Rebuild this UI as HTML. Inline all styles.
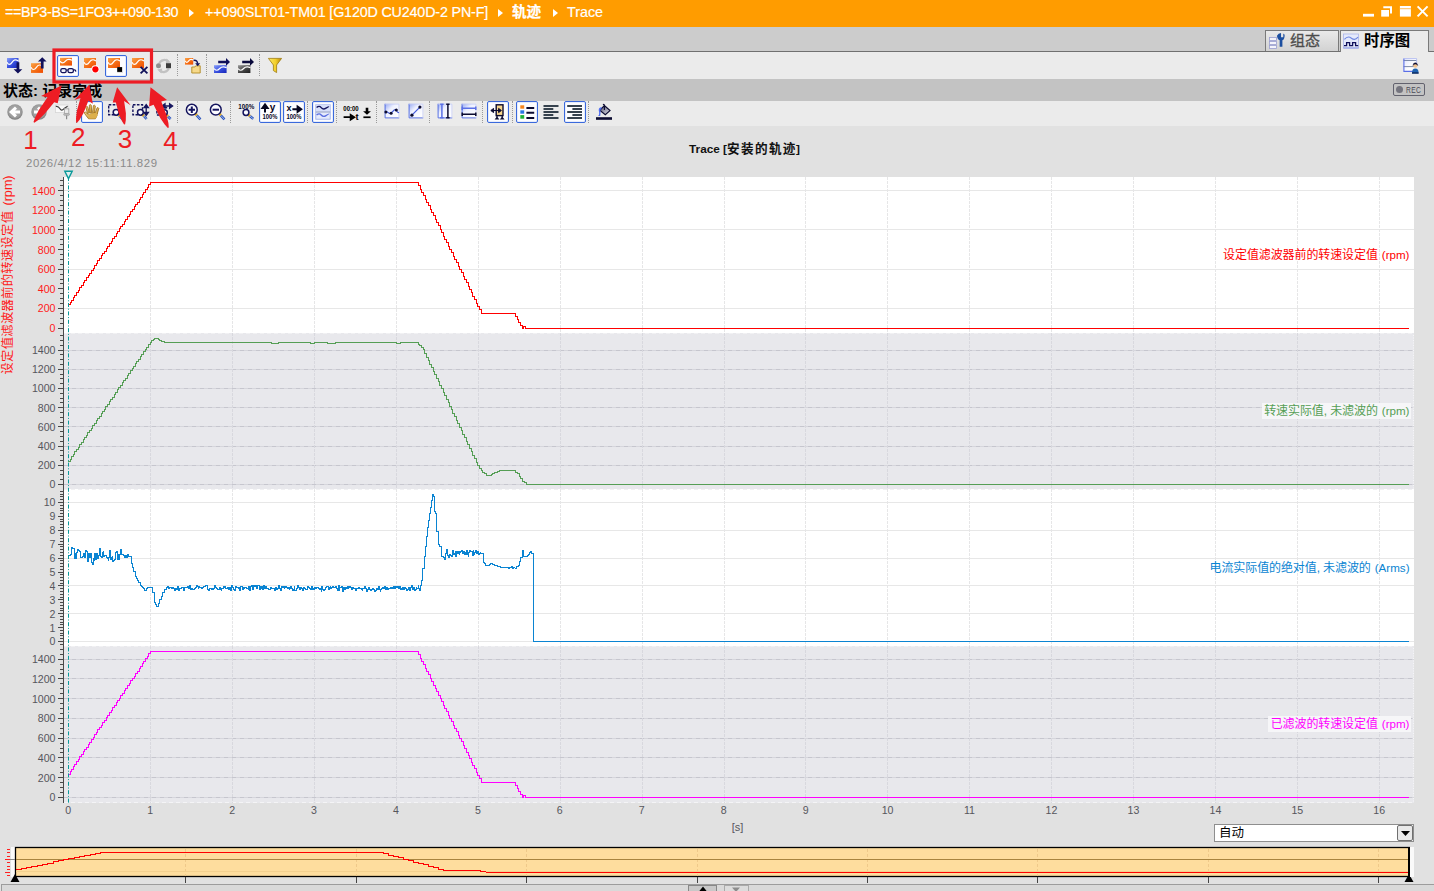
<!DOCTYPE html><html lang="zh-CN"><head><meta charset="utf-8"><title>Trace</title><style>
html,body{margin:0;padding:0;background:#e1e1e1;}
body{width:1434px;height:891px;overflow:hidden;position:relative;font-family:"Liberation Sans", "Noto Sans CJK SC", sans-serif;}
#root{position:absolute;left:0;top:0;width:1434px;height:891px;overflow:hidden;background:#e1e1e1;}
#root div,#root svg,#root span,#root i{position:absolute;}
.tri{top:9px;width:0;height:0;border-left:5px solid #fff;border-top:4px solid transparent;border-bottom:4px solid transparent;}
.title{left:0;top:0;width:1434px;height:27px;background:#ff9c00;}
.title span{top:3px;color:#fff;font-size:14.3px;line-height:18px;white-space:pre;-webkit-text-stroke:.2px #fff;}
.tabband{left:0;top:27px;width:1434px;height:24px;background:#cccccc;}
.tabline{left:0;top:51px;width:1434px;height:1px;background:#707070;}
.tb1{left:0;top:52px;width:1434px;height:27px;background:#ebebeb;}
.status{left:0;top:79px;width:1434px;height:22px;background:#c3c3c3;}
.status span{left:3px;top:2px;font-size:15px;font-weight:bold;line-height:20px;color:#000;white-space:pre;}
.tb2{left:0;top:101px;width:1434px;height:25px;background:#ebebeb;}
.ic{overflow:visible;}
.sel{width:20px;height:20px;border:1px solid #3a69dc;border-radius:2px;background:#fdfdff;box-shadow:inset 0 0 0 1px #e6ecfb;}
.sep{width:0;height:22px;border-left:1px dotted #9a9a9a;}
.tab{top:30px;height:21px;border:1px solid #7a7a7a;border-bottom:none;box-sizing:border-box;font-size:15px;line-height:20px;white-space:pre;}
.chart{left:0;top:0;}
.ann{overflow:visible;}
.combo{left:1214px;top:824px;width:198px;height:16px;background:#fff;border:1px solid #8e8e8e;font-size:12.5px;line-height:16px;color:#000;}
.combo span{left:4px;top:0;}
.combo div{right:0;top:0;width:14px;height:14px;border:1px solid #707070;background:#e9e9e9;border-radius:2px;}
.hbar{left:1px;top:884px;width:1432px;height:6px;background:#d9d9d9;border:1px solid #9c9c9c;border-bottom:none;}
</style></head><body><div id="root"><div class="title"><span style="left:5px;letter-spacing:-0.35px">==BP3-BS=1FO3++090-130</span><i class="tri" style="left:189px"></i><span style="left:205px;letter-spacing:-0.16px">++090SLT01-TM01 [G120D CU240D-2 PN-F]</span><i class="tri" style="left:498px"></i><span style="left:512px;font-weight:bold;font-size:14.6px">轨迹</span><i class="tri" style="left:553px"></i><span style="left:567px">Trace</span><svg style="left:1360px;top:5px" width="72" height="16" viewBox="0 0 72 16"><rect x="3" y="8.8" width="11" height="2.8" fill="#fff"/><path d="M23.3 2.3 H31 V8.6" fill="none" stroke="#fff" stroke-width="2"/><rect x="21.2" y="5" width="7.8" height="6.6" fill="#fff"/><rect x="39.9" y="1" width="11" height="10.6" fill="#fff"/><rect x="39.9" y="3.3" width="11" height=".9" fill="#ffb240"/><path d="M57.6 1.4 l10 10 M67.6 1.4 l-10 10" stroke="#fff" stroke-width="2"/></svg></div><div class="tabband"></div><div class="tabline"></div><div class="tab" style="left:1265px;width:74px;background:linear-gradient(#e9e9e9,#d2d2d2);color:#4c4c4c;-webkit-text-stroke:.3px #4c4c4c;"><svg style="left:3px;top:2px" width="18" height="17" viewBox="0 0 18 17"><g fill="#f4f4fb" stroke="#9a9ed0" stroke-width=".8"><rect x=".5" y="4.5" width="7" height="3"/><rect x=".5" y="8.5" width="7" height="3"/><rect x=".5" y="12.5" width="7" height="3"/></g><g transform="translate(-2.2 -.6) scale(1.13)"><path d="M9 3 q.4 3.4 2.4 4 v5.6 h2.4 v-5.6 q2 -.8 2 -5 l-1.2 -1 v3.4 h-2 v-3.8 q-2.4 .2 -3.6 2.4z" fill="#1d4fa0"/></g></svg><span style="left:24px;top:0">组态</span></div><div class="tab" style="left:1340px;width:89px;height:22px;background:#ebebeb;color:#000;font-weight:bold;"><svg style="left:2px;top:2px" width="17" height="17" viewBox="0 0 17 17"><rect x=".5" y="1" width="15" height="14" fill="#e4e9fb" stroke="#aab4ea" stroke-width=".8"/><path d="M1.4 6.4 q3.4 -4 7 -1.2 t6.6 -1" fill="none" stroke="#6f86e0" stroke-width="1.1"/><path d="M1 12.6 h2.6 v-3 h3 v3 h3 v-3 h3 v3 h2.6" fill="none" stroke="#10105a" stroke-width="1.3"/><path d="M.5 15 h15" stroke="#8f9de8" stroke-width="1"/></svg><span style="left:23px;top:0;font-size:15.4px">时序图</span></div><div class="tb1"></div><div class="status"><span>状态: 记录完成</span><div style="left:1393px;top:4px;width:32px;height:13px;border:1px solid #62626e;border-radius:2px;box-sizing:border-box;"></div><div style="left:1396px;top:7px;width:7px;height:7px;border-radius:50%;background:#74747e;"></div><span style="left:1406px;top:4.5px;font-size:9px;font-weight:normal;line-height:12px;color:#4a4a56;letter-spacing:.5px;transform:scaleX(.74);transform-origin:0 50%;">REC</span></div><div class="tb2"></div><svg class="ic" style="left:7.0px;top:58.0px" width="16" height="16" viewBox="0 0 16 16"><defs><linearGradient id="g1" x1="0" y1="0" x2="1" y2="1"><stop offset="0" stop-color="#8aa0fa"/><stop offset=".5" stop-color="#3a52e0"/><stop offset="1" stop-color="#1626b8"/></linearGradient></defs><rect x="0.0" y="0.0" width="11.5" height="10.0" fill="url(#g1)"/><path d="M0.0 4.2 c1.4 3.0 3.2 3.0 5.2 0.0 s3.4 -3.0 6.3 -1.2" fill="none" stroke="#fff" stroke-width="1.2"/><path d="M9.6 4.3 h2.7 v7 h3 l-4.35 4.2 l-4.35 -4.2 h3z" fill="#10105a"/></svg><svg class="ic" style="left:31.0px;top:58.0px" width="16" height="16" viewBox="0 0 16 16"><defs><linearGradient id="g2" x1="0" y1="0" x2="1" y2="1"><stop offset="0" stop-color="#f9a248"/><stop offset=".5" stop-color="#f57218"/><stop offset="1" stop-color="#ee4a00"/></linearGradient></defs><rect x="0.0" y="5.2" width="12.0" height="9.7" fill="url(#g2)"/><path d="M0.0 9.3 c1.4 2.9 3.4 2.9 5.4 0.0 s3.6 -2.9 6.6 -1.2" fill="none" stroke="#fff" stroke-width="1.2"/><path d="M9.9 10.4 h2.7 v-7 h3 l-4.35 -4.2 l-4.35 4.2 h3z" fill="#10105a"/></svg><div class="sel" style="left:57.0px;top:55.0px"></div><svg class="ic" style="left:60.0px;top:58.0px" width="16" height="16" viewBox="0 0 16 16"><defs><linearGradient id="g3" x1="0" y1="0" x2="1" y2="1"><stop offset="0" stop-color="#f9a248"/><stop offset=".5" stop-color="#f57218"/><stop offset="1" stop-color="#ee4a00"/></linearGradient></defs><rect x="0.0" y="-0.2" width="12.0" height="7.8" fill="url(#g3)"/><path d="M0.0 3.1 c1.4 2.3 3.4 2.3 5.4 0.0 s3.6 -2.3 6.6 -0.9" fill="none" stroke="#fff" stroke-width="1.2"/><g fill="#eef0fa" stroke="#10105a" stroke-width="1.3"><rect x=".8" y="10.6" width="5.4" height="4" rx="1.6"/><rect x="8" y="10.6" width="5.4" height="4" rx="1.6"/></g><path d="M6.2 12 h1.8 M13.4 12 q2.2 -.6 2.4 1.6" fill="none" stroke="#10105a" stroke-width="1.2"/></svg><svg class="ic" style="left:84.0px;top:58.0px" width="16" height="16" viewBox="0 0 16 16"><defs><linearGradient id="g4" x1="0" y1="0" x2="1" y2="1"><stop offset="0" stop-color="#f9a248"/><stop offset=".5" stop-color="#f57218"/><stop offset="1" stop-color="#ee4a00"/></linearGradient></defs><rect x="0.0" y="0.0" width="12.0" height="10.0" fill="url(#g4)"/><path d="M0.0 4.2 c1.4 3.0 3.4 3.0 5.4 0.0 s3.6 -3.0 6.6 -1.2" fill="none" stroke="#fff" stroke-width="1.2"/><circle cx="11.4" cy="11.3" r="4" fill="#fff"/><circle cx="11.4" cy="11.3" r="3.1" fill="#ff0000"/></svg><div class="sel" style="left:105.0px;top:55.0px"></div><svg class="ic" style="left:108.0px;top:58.0px" width="16" height="16" viewBox="0 0 16 16"><defs><linearGradient id="g5" x1="0" y1="0" x2="1" y2="1"><stop offset="0" stop-color="#f9a248"/><stop offset=".5" stop-color="#f57218"/><stop offset="1" stop-color="#ee4a00"/></linearGradient></defs><rect x="0.0" y="0.0" width="12.0" height="10.0" fill="url(#g5)"/><path d="M0.0 4.2 c1.4 3.0 3.4 3.0 5.4 0.0 s3.6 -3.0 6.6 -1.2" fill="none" stroke="#fff" stroke-width="1.2"/><rect x="9.2" y="9.1" width="5.8" height="5.8" fill="#dcdcdc"/><rect x="9.2" y="9.1" width="4.8" height="4.8" fill="#000"/></svg><svg class="ic" style="left:132.0px;top:58.0px" width="16" height="16" viewBox="0 0 16 16"><defs><linearGradient id="g6" x1="0" y1="0" x2="1" y2="1"><stop offset="0" stop-color="#f9a248"/><stop offset=".5" stop-color="#f57218"/><stop offset="1" stop-color="#ee4a00"/></linearGradient></defs><rect x="0.0" y="0.0" width="12.0" height="10.0" fill="url(#g6)"/><path d="M0.0 4.2 c1.4 3.0 3.4 3.0 5.4 0.0 s3.6 -3.0 6.6 -1.2" fill="none" stroke="#fff" stroke-width="1.2"/><path d="M8.6 8.8 l6.8 6.6 M15.4 8.8 l-6.8 6.6" stroke="#10105a" stroke-width="1.8"/></svg><svg class="ic" style="left:156.0px;top:58.0px" width="16" height="16" viewBox="0 0 16 16"><g fill="none" stroke="#c2c2c2" stroke-width="2.2"><path d="M3.2 5.6 a5.6 5.6 0 0 1 9.2 -2"/><path d="M12.8 10.4 a5.6 5.6 0 0 1 -9.2 2"/></g><path d="M10.6 .6 l4.2 3.8 l-5 1.2z M5.4 15.4 l-4.2 -3.8 l5 -1.2z" fill="#c2c2c2"/><circle cx="2.5" cy="7.7" r="2.5" fill="#8f8f8f"/><rect x="10" y="5.2" width="5" height="5" fill="#3c3c3c"/></svg><div class="sep" style="left:177px;top:54px"></div><svg class="ic" style="left:185.0px;top:58.0px" width="16" height="16" viewBox="0 0 16 16"><defs><linearGradient id="g8" x1="0" y1="0" x2="1" y2="1"><stop offset="0" stop-color="#f9a248"/><stop offset=".5" stop-color="#f57218"/><stop offset="1" stop-color="#ee4a00"/></linearGradient></defs><rect x="0.0" y="0.0" width="8.2" height="6.6" fill="url(#g8)"/><path d="M0.0 2.8 c1.0 2.0 2.3 2.0 3.7 0.0 s2.5 -2.0 4.5 -0.8" fill="none" stroke="#fff" stroke-width="1.2"/><path d="M6.8 9 h3 l1 -1.2 h4.4 v7.2 h-8.4z" fill="#f6d98a" stroke="#b08a24" stroke-width=".9"/><path d="M8.6 2.4 q4 -.6 4 3.4" fill="none" stroke="#10105a" stroke-width="1.5"/><path d="M10.2 5.2 h5 l-2.5 3z" fill="#10105a"/></svg><div class="sep" style="left:206px;top:54px"></div><svg class="ic" style="left:214.0px;top:58.0px" width="16" height="16" viewBox="0 0 16 16"><defs><linearGradient id="g9" x1="0" y1="0" x2="1" y2="1"><stop offset="0" stop-color="#8aa0fa"/><stop offset=".5" stop-color="#3a52e0"/><stop offset="1" stop-color="#1626b8"/></linearGradient></defs><rect x="0.0" y="7.2" width="12.6" height="7.8" fill="url(#g9)"/><path d="M0.0 10.5 c1.5 2.3 3.5 2.3 5.7 0.0 s3.8 -2.3 6.9 -0.9" fill="none" stroke="#fff" stroke-width="1.2"/><path d="M4.2 2.7 h7.8 v-2.7 l4 3.9 l-4 3.9 v-2.6 h-7.8z" fill="#10105a"/></svg><svg class="ic" style="left:238.0px;top:58.0px" width="16" height="16" viewBox="0 0 16 16"><defs><linearGradient id="g10" x1="0" y1="0" x2="1" y2="1"><stop offset="0" stop-color="#9a9a9a"/><stop offset=".5" stop-color="#4a4a4a"/><stop offset="1" stop-color="#1e1e1e"/></linearGradient></defs><rect x="0.0" y="7.2" width="12.4" height="7.8" fill="url(#g10)"/><path d="M0.0 10.5 c1.5 2.3 3.5 2.3 5.6 0.0 s3.7 -2.3 6.8 -0.9" fill="none" stroke="#fff" stroke-width="1.2"/><path d="M4.2 2.7 h7.8 v-2.7 l4 3.9 l-4 3.9 v-2.6 h-7.8z" fill="#0a0a3c"/></svg><div class="sep" style="left:259px;top:54px"></div><svg class="ic" style="left:266.5px;top:58.0px" width="16" height="16" viewBox="0 0 16 16"><defs><linearGradient id="gf" x1="0" y1="0" x2="1" y2="0"><stop offset="0" stop-color="#fbe96e"/><stop offset=".55" stop-color="#f2cf2a"/><stop offset="1" stop-color="#b8860b"/></linearGradient></defs><path d="M1.4 .4 h13.2 l-5 6.6 v7.6 l-3.2 -2 v-5.6z" fill="url(#gf)" stroke="#a07c10" stroke-width=".8"/></svg><svg class="ic" style="left:1403.0px;top:58.0px" width="16" height="16" viewBox="0 0 16 16"><defs><linearGradient id="gtb" x1="0" y1="0" x2="1" y2="1"><stop offset="0" stop-color="#dfe4fb"/><stop offset=".6" stop-color="#ffffff"/></linearGradient></defs><rect x=".6" y=".4" width="13" height="13.2" fill="url(#gtb)"/><path d="M.6 2.5 h13 M.6 8.6 h13" stroke="#7e8ca8" stroke-width="1"/><path d="M.9 .4 v13 h9" fill="none" stroke="#5a6ee6" stroke-width="1.1"/><path d="M.6 .6 h13 v8" fill="none" stroke="#aab4ee" stroke-width=".8"/><path d="M9 15.4 q-.2 -4.8 3.3 -4.8 q3.5 0 3.3 4.8z" fill="#1e62b0"/><rect x="9" y="14.4" width="6.6" height="1.2" fill="#0a1e50"/><circle cx="12.3" cy="7.6" r="2.2" fill="#f2c48e"/><path d="M10 7.4 q.2 -2.6 2.3 -2.6 q2.1 0 2.3 2.6 q-.6 -1.4 -2.3 -1.4 q-1.7 0 -2.3 1.4z" fill="#0a0a30" stroke="#0a0a30" stroke-width=".5"/></svg><svg class="ic" style="left:6.6px;top:103.5px" width="16" height="16" viewBox="0 0 16 16"><defs><radialGradient id="gb0" cx=".5" cy=".45" r=".55"><stop offset="0" stop-color="#b4b4b4"/><stop offset=".75" stop-color="#9c9c9c"/><stop offset="1" stop-color="#7a7a7a"/></radialGradient></defs><circle cx="8" cy="8" r="7.7" fill="url(#gb0)"/><path d="M13 8 h-7 M9 3.6 l-4.8 4.4 l4.8 4.4" fill="none" stroke="#fff" stroke-width="3" stroke-linejoin="miter"/></svg><svg class="ic" style="left:30.7px;top:103.5px" width="16" height="16" viewBox="0 0 16 16"><defs><radialGradient id="gb1" cx=".5" cy=".45" r=".55"><stop offset="0" stop-color="#b4b4b4"/><stop offset=".75" stop-color="#9c9c9c"/><stop offset="1" stop-color="#7a7a7a"/></radialGradient></defs><circle cx="8" cy="8" r="7.7" fill="url(#gb1)"/><path d="M3 8 h7 M7 3.6 l4.8 4.4 l-4.8 4.4" fill="none" stroke="#fff" stroke-width="3" stroke-linejoin="miter"/></svg><svg class="ic" style="left:55.0px;top:103.5px" width="16" height="16" viewBox="0 0 16 16"><rect x=".4" y="1" width="12.6" height="7.6" fill="#fafafa" stroke="#d6d6d6" stroke-width=".8"/><path d="M.8 2.4 q2.6 -.4 4.2 2.4 t4.6 -.6 l3 -2" fill="none" stroke="#3e3e3e" stroke-width="1.2"/><rect x="9.4" y="4.8" width="4.4" height="4.6" fill="#ececec" stroke="#a6a6a6" stroke-width=".9"/><path d="M8.4 10 h6.4 l-1 1.6 h-4.4z" fill="#c4c4c4" stroke="#a0a0a0" stroke-width=".6"/><path d="M11.6 11.6 v3.6" stroke="#8a8a8a" stroke-width="1.2"/></svg><div class="sep" style="left:76px;top:101px"></div><div class="sel" style="left:81.0px;top:101.0px"></div><svg class="ic" style="left:84.0px;top:104.0px" width="16" height="16" viewBox="0 0 16 16"><defs><linearGradient id="gh" x1="0" y1="0" x2="1" y2="1"><stop offset="0" stop-color="#f4d890"/><stop offset="1" stop-color="#c48c24"/></linearGradient></defs><g fill="url(#gh)" stroke="#9c6c14" stroke-width=".8" stroke-linejoin="round"><path d="M4.6 14.8 q-2.4 -3 -4.2 -5.6 q-.3 -1.5 1.2 -1.1 l2.6 2.4 l6.8 -1.4 l2 -.6 q.6 3.6 -1.6 6.3z"/><path d="M3.4 9.6 l-1.5 -6.4 q.6 -1.3 1.8 -.4 l1.7 6z"/><path d="M5.8 8.8 l-.5 -7.6 q.9 -1.2 1.9 -.1 l.6 7.6z"/><path d="M8.5 8.7 l.9 -7.1 q1.1 -.9 1.9 .3 l-.7 7.1z"/><path d="M11.1 9.2 l2 -5.4 q1.1 -.6 1.7 .6 l-1.6 5.8z"/></g><path d="M4.2 10.2 l8.6 -1.6 l.6 3 l-1.6 2.8 h-6.6z" fill="#ddb04c"/></svg><svg class="ic" style="left:108.0px;top:104.0px" width="16" height="16" viewBox="0 0 16 16"><rect x="0.7" y="0.8" width="9.8" height="10.0" fill="none" stroke="#15155e" stroke-width="1.4" stroke-dasharray="2.6 1.4"/><line x1="11.7" y1="12.0" x2="14.6" y2="15.0" stroke="#2f55b8" stroke-width="2.6"/><line x1="11.7" y1="12.0" x2="14.6" y2="15.0" stroke="#8fb0ee" stroke-width="1"/><line x1="10.3" y1="10.5" x2="11.7" y2="12.0" stroke="#e3b02a" stroke-width="2.8"/><circle cx="8.1" cy="8.3" r="2.9" fill="#fbfbff" stroke="#15155e" stroke-width="1.5"/></svg><svg class="ic" style="left:132.0px;top:104.0px" width="16" height="16" viewBox="0 0 16 16"><rect x="0.9" y="0.8" width="9.6" height="10.0" fill="none" stroke="#15155e" stroke-width="1.4" stroke-dasharray="2.6 1.4"/><line x1="11.9" y1="12.0" x2="14.6" y2="15.0" stroke="#2f55b8" stroke-width="2.6"/><line x1="11.9" y1="12.0" x2="14.6" y2="15.0" stroke="#8fb0ee" stroke-width="1"/><line x1="10.5" y1="10.6" x2="11.9" y2="12.0" stroke="#e3b02a" stroke-width="2.8"/><circle cx="8.4" cy="8.3" r="2.9" fill="#fbfbff" stroke="#15155e" stroke-width="1.5"/><path d="M14.2 2 v8 M12 3.6 l2.2 -3 l2.2 3z M12 8.4 l2.2 3 l2.2 -3z" stroke="#15155e" stroke-width="1.3" fill="#15155e"/></svg><svg class="ic" style="left:156.0px;top:104.0px" width="16" height="16" viewBox="0 0 16 16"><rect x="0.9" y="3.6" width="9.6" height="7.4" fill="none" stroke="#15155e" stroke-width="1.4" stroke-dasharray="2.6 1.4"/><line x1="11.9" y1="12.3" x2="14.6" y2="15.0" stroke="#2f55b8" stroke-width="2.6"/><line x1="11.9" y1="12.3" x2="14.6" y2="15.0" stroke="#8fb0ee" stroke-width="1"/><line x1="10.6" y1="10.8" x2="11.9" y2="12.3" stroke="#e3b02a" stroke-width="2.8"/><circle cx="8.4" cy="8.6" r="2.9" fill="#fbfbff" stroke="#15155e" stroke-width="1.5"/><path d="M7.6 2 h7.6 M9 -.2 l-3 2.2 l3 2.2z M13.6 -.2 l3 2.2 l-3 2.2z" stroke="#15155e" stroke-width="1.3" fill="#15155e"/></svg><div class="sep" style="left:177px;top:101px"></div><svg class="ic" style="left:184.5px;top:104.0px" width="16" height="16" viewBox="0 0 16 16"><line x1="11.8" y1="11.4" x2="15.4" y2="15.4" stroke="#2f55b8" stroke-width="2.6"/><line x1="11.8" y1="11.4" x2="15.4" y2="15.4" stroke="#8fb0ee" stroke-width="1"/><line x1="10.5" y1="9.9" x2="11.8" y2="11.4" stroke="#e3b02a" stroke-width="2.8"/><circle cx="6.8" cy="5.7" r="5.4" fill="#fbfbff" stroke="#15155e" stroke-width="1.5"/><path d="M3.6 5.7 h6.4 M6.8 2.5 v6.4" stroke="#15155e" stroke-width="2"/></svg><svg class="ic" style="left:208.5px;top:104.0px" width="16" height="16" viewBox="0 0 16 16"><line x1="11.8" y1="11.4" x2="15.4" y2="15.4" stroke="#2f55b8" stroke-width="2.6"/><line x1="11.8" y1="11.4" x2="15.4" y2="15.4" stroke="#8fb0ee" stroke-width="1"/><line x1="10.5" y1="9.9" x2="11.8" y2="11.4" stroke="#e3b02a" stroke-width="2.8"/><circle cx="6.8" cy="5.7" r="5.4" fill="#fbfbff" stroke="#15155e" stroke-width="1.5"/><path d="M3.6 5.7 h6.4" stroke="#15155e" stroke-width="2"/></svg><div class="sep" style="left:230px;top:101px"></div><svg class="ic" style="left:238.0px;top:104.0px" width="16" height="16" viewBox="0 0 16 16"><text x="8.3" y="4.7" font-size="6.4" text-anchor="middle" fill="#0a0a2a" font-family="Liberation Sans, sans-serif" font-weight="bold" textLength="16" lengthAdjust="spacingAndGlyphs">100%</text><line x1="11.8" y1="11.9" x2="15.2" y2="14.8" stroke="#2f55b8" stroke-width="2.6"/><line x1="11.8" y1="11.9" x2="15.2" y2="14.8" stroke="#8fb0ee" stroke-width="1"/><line x1="10.3" y1="10.5" x2="11.8" y2="11.9" stroke="#e3b02a" stroke-width="2.8"/><circle cx="8.0" cy="8.5" r="2.9" fill="#fbfbff" stroke="#15155e" stroke-width="1.5"/></svg><div class="sel" style="left:259.0px;top:101.0px"></div><svg class="ic" style="left:262.0px;top:104.0px" width="16" height="16" viewBox="0 0 16 16"><path d="M3 8.6 v-5 M.4 4 l2.6 -3.6 l2.6 3.6z" stroke="#05051e" stroke-width="2" fill="#05051e"/><text x="10.6" y="7" font-size="10" text-anchor="middle" fill="#05051e" font-family="Liberation Sans, sans-serif" font-weight="bold">y</text><text x="8" y="14.9" font-size="6.4" text-anchor="middle" fill="#05051e" font-family="Liberation Sans, sans-serif" font-weight="bold" textLength="15" lengthAdjust="spacingAndGlyphs">100%</text></svg><div class="sel" style="left:283.0px;top:101.0px"></div><svg class="ic" style="left:286.0px;top:104.0px" width="16" height="16" viewBox="0 0 16 16"><path d="M6.4 5.2 h6 M11.6 2.6 l3.6 2.6 l-3.6 2.6z" stroke="#05051e" stroke-width="2" fill="#05051e"/><text x="3" y="7.4" font-size="9" text-anchor="middle" fill="#05051e" font-family="Liberation Sans, sans-serif" font-weight="bold">x</text><text x="8" y="14.9" font-size="6.4" text-anchor="middle" fill="#05051e" font-family="Liberation Sans, sans-serif" font-weight="bold" textLength="15" lengthAdjust="spacingAndGlyphs">100%</text></svg><div class="sep" style="left:307px;top:101px"></div><div class="sel" style="left:312.0px;top:101.0px"></div><svg class="ic" style="left:315.0px;top:104.0px" width="16" height="16" viewBox="0 0 16 16"><rect x=".8" y=".8" width="14.4" height="14.4" fill="#e6ebfc" stroke="#9fb0ea" stroke-width=".9"/><rect x=".8" y=".8" width="14.4" height="7" fill="#d7dffa"/><path d="M.8 8 h14.4" stroke="#8c98b8" stroke-width=".9"/><path d="M1.6 3.6 q2.6 -2.4 4.6 0 t4.8 .6 t3 -1.6" fill="none" stroke="#15155e" stroke-width="1.4"/><path d="M1.6 11 q2.6 -2.4 4.6 0 t4.8 .6 t3 -1.6" fill="none" stroke="#5a6ee0" stroke-width="1.3"/></svg><div class="sep" style="left:336px;top:101px"></div><svg class="ic" style="left:342.5px;top:104.0px" width="16" height="16" viewBox="0 0 16 16"><text x="8" y="7.4" font-size="7.6" text-anchor="middle" fill="#000" font-family="Liberation Sans, sans-serif" font-weight="bold" textLength="15.4" lengthAdjust="spacingAndGlyphs">00:00</text><path d="M.6 13.2 h7 v-2.4 l3.8 2.4 l-3.8 2.4 v-2.4" stroke="#000" stroke-width="1.7" fill="#000"/><text x="14" y="16" font-size="9.4" text-anchor="middle" fill="#000" font-family="Liberation Sans, sans-serif" font-weight="bold">t</text></svg><svg class="ic" style="left:358.7px;top:104.0px" width="16" height="16" viewBox="0 0 16 16"><path d="M6.7 3.8 h2.6 v3.4 h2.6 l-3.9 3.6 l-3.9 -3.6 h2.6z" fill="#000"/><rect x="4.4" y="12.4" width="7.2" height="1.7" fill="#000"/></svg><div class="sep" style="left:376px;top:101px"></div><svg class="ic" style="left:383.5px;top:103.4px" width="16" height="16" viewBox="0 0 16 16"><defs><linearGradient id="gp1" x1="0" y1="0" x2=".9" y2=".9"><stop offset="0" stop-color="#93a6f2"/><stop offset=".42" stop-color="#eef1ff"/><stop offset="1" stop-color="#ffffff"/></linearGradient></defs><rect x="0.8" y="0.8" width="14.4" height="14.4" fill="url(#gp1)"/><path d="M1.1 0.8 v14.1 h14.1" fill="none" stroke="#5a72e0" stroke-width="1"/><path d="M0.8 1.1 h14.1 v14.1" fill="none" stroke="#c4ccf2" stroke-width=".8"/><path d="M1.6 8.4 q1.4 .2 2.6 1.2 t2.8 .6 l3.4 -3.4 q2 -.2 3.2 2.4 l1.4 .6" fill="none" stroke="#3f57d8" stroke-width="1.1"/><circle cx="1.9" cy="8.9" r="1.5" fill="#0b0b30"/><circle cx="7.1" cy="10.2" r="1.5" fill="#0b0b30"/><circle cx="12.3" cy="6.9" r="1.5" fill="#0b0b30"/></svg><svg class="ic" style="left:407.5px;top:103.4px" width="16" height="16" viewBox="0 0 16 16"><defs><linearGradient id="gp2" x1="0" y1="0" x2=".9" y2=".9"><stop offset="0" stop-color="#93a6f2"/><stop offset=".42" stop-color="#eef1ff"/><stop offset="1" stop-color="#ffffff"/></linearGradient></defs><rect x="0.8" y="0.8" width="14.4" height="14.4" fill="url(#gp2)"/><path d="M1.1 0.8 v14.1 h14.1" fill="none" stroke="#5a72e0" stroke-width="1"/><path d="M0.8 1.1 h14.1 v14.1" fill="none" stroke="#c4ccf2" stroke-width=".8"/><path d="M3.9 12.2 l8 -8.1" fill="none" stroke="#3f57d8" stroke-width="1.2"/><circle cx="3.9" cy="12.2" r="1.6" fill="#0b0b30"/><circle cx="11.9" cy="4.1" r="1.6" fill="#0b0b30"/></svg><div class="sep" style="left:429px;top:101px"></div><svg class="ic" style="left:436.6px;top:103.4px" width="16" height="16" viewBox="0 0 16 16"><defs><linearGradient id="gp3" x1="0" y1="0" x2=".9" y2=".9"><stop offset="0" stop-color="#93a6f2"/><stop offset=".42" stop-color="#eef1ff"/><stop offset="1" stop-color="#ffffff"/></linearGradient></defs><rect x="0.8" y="0.8" width="14.4" height="14.4" fill="url(#gp3)"/><path d="M1.1 0.8 v14.1 h14.1" fill="none" stroke="#5a72e0" stroke-width="1"/><path d="M0.8 1.1 h14.1 v14.1" fill="none" stroke="#c4ccf2" stroke-width=".8"/><path d="M4.9 1 v14 M3.2 1.2 h3.4 M3.2 14.8 h3.4" stroke="#5b70e6" stroke-width="1.5" fill="none"/><path d="M10.9 1 v14 M9.2 1.2 h3.4 M9.2 14.8 h3.4" stroke="#0b0b30" stroke-width="1.5" fill="none"/></svg><svg class="ic" style="left:460.6px;top:103.4px" width="16" height="16" viewBox="0 0 16 16"><defs><linearGradient id="gp4" x1="0" y1="0" x2=".9" y2=".9"><stop offset="0" stop-color="#93a6f2"/><stop offset=".42" stop-color="#eef1ff"/><stop offset="1" stop-color="#ffffff"/></linearGradient></defs><rect x="0.8" y="0.8" width="14.4" height="14.4" fill="url(#gp4)"/><path d="M1.1 0.8 v14.1 h14.1" fill="none" stroke="#5a72e0" stroke-width="1"/><path d="M0.8 1.1 h14.1 v14.1" fill="none" stroke="#c4ccf2" stroke-width=".8"/><path d="M1 5.2 h14 M1.2 3.5 v3.4 M14.8 3.5 v3.4" stroke="#5b70e6" stroke-width="1.5" fill="none"/><path d="M1 11.3 h14 M1.2 9.6 v3.4 M14.8 9.6 v3.4" stroke="#0b0b30" stroke-width="1.5" fill="none"/></svg><div class="sep" style="left:482px;top:101px"></div><div class="sel" style="left:487.0px;top:101.0px"></div><svg class="ic" style="left:490.0px;top:104.0px" width="16" height="16" viewBox="0 0 16 16"><rect x="6.2" y=".8" width="6.8" height="10.8" fill="#f6d58c" stroke="#0b0b30" stroke-width="1.4"/><path d="M1.4 6.5 h9.4 M3.6 4.4 l-2.8 2.1 l2.8 2.1z M8.6 4.4 l2.8 2.1 l-2.8 2.1z" stroke="#0b0b30" stroke-width="1" fill="#0b0b30"/><path d="M7 11.6 v2 M12.2 11.6 v2" stroke="#0b0b30" stroke-width="1.3"/><path d="M4.6 15.4 h4.8 l-2.4 -3z M9.8 15.4 h4.8 l-2.4 -3z" fill="#0b0b30"/></svg><div class="sep" style="left:512px;top:101px"></div><div class="sel" style="left:516.0px;top:101.0px"></div><svg class="ic" style="left:519.0px;top:104.0px" width="16" height="16" viewBox="0 0 16 16"><rect x="1.3" y="1.3" width="3.9" height="3.4" fill="#f6861e"/><rect x="1.3" y="6.3" width="3.9" height="3.4" fill="#2a78e4"/><rect x="1.3" y="11.1" width="3.9" height="3.6" fill="#1fb43a"/><path d="M7.4 4 h7.8 M7.4 8.8 h7.8 M7.4 14 h7.8" stroke="#0b0b30" stroke-width="2"/></svg><svg class="ic" style="left:542.5px;top:104.0px" width="16" height="16" viewBox="0 0 16 16"><path d="M.5 2 h15 M.5 5 h9.8 M.5 8 h15 M.5 11 h9.8 M.5 14 h15" stroke="#36424e" stroke-width="2"/></svg><div class="sel" style="left:564.0px;top:101.0px"></div><svg class="ic" style="left:567.0px;top:104.0px" width="16" height="16" viewBox="0 0 16 16"><path d="M.2 2 h14.8 M5.4 5 h9.6 M.2 8 h14.8 M5.4 11 h9.6 M.2 14 h14.8" stroke="#36424e" stroke-width="2"/></svg><div class="sep" style="left:588px;top:101px"></div><svg class="ic" style="left:596.0px;top:104.0px" width="16" height="16" viewBox="0 0 16 16"><defs><linearGradient id="gpb" x1="0" y1="0" x2="1" y2="1"><stop offset="0" stop-color="#4a4a66"/><stop offset="1" stop-color="#e8e8f2"/></linearGradient></defs><path d="M3.7 6.3 l4.7 -4.7 l5.6 5 l-4.7 4.2z" fill="url(#gpb)" stroke="#0b0b30" stroke-width="1.2" stroke-linejoin="miter"/><path d="M8.4 6 v-4.6 q-.2 -1.6 -1.4 -.6" fill="none" stroke="#0b0b30" stroke-width="1.1"/><path d="M5.4 3.2 q-3 .2 -2.6 3.2 q.6 2.6 .2 4.4 q-.6 1 -.8 1.2 h2 q.6 -3 .2 -5.4 q.2 -2 1.6 -2.6z" fill="#4f6cf2"/><rect x="0" y="13.2" width="16" height="2.6" fill="#0b0b30"/></svg><svg class="chart" width="1434" height="891" viewBox="0 0 1434 891">
<defs><pattern id="dotg" width="8" height="1" patternUnits="userSpaceOnUse"><rect x="0" y="0" width="8" height="1" fill="#d6d6dc"/><rect x="0" y="0" width="4" height="1" fill="#c6c6ce"/></pattern></defs>
<rect x="64" y="177" width="1350" height="156" fill="#ffffff"/>
<rect x="64" y="333" width="1350" height="156" fill="#e8e8ec"/>
<rect x="64" y="489" width="1350" height="157" fill="#ffffff"/>
<rect x="64" y="646" width="1350" height="157" fill="#e8e8ec"/>
<rect x="64" y="190" width="1350" height="1" fill="#e7e7e7"/><rect x="64" y="229" width="1350" height="1" fill="#e7e7e7"/><rect x="64" y="269" width="1350" height="1" fill="#e7e7e7"/><rect x="64" y="308" width="1350" height="1" fill="#e7e7e7"/><rect x="64" y="502" width="1350" height="1" fill="#e7e7e7"/><rect x="64" y="530" width="1350" height="1" fill="#e7e7e7"/><rect x="64" y="558" width="1350" height="1" fill="#e7e7e7"/><rect x="64" y="585" width="1350" height="1" fill="#e7e7e7"/><rect x="64" y="613" width="1350" height="1" fill="#e7e7e7"/><rect x="64" y="641" width="1350" height="1" fill="#e7e7e7"/><rect x="64" y="484" width="1350" height="1" fill="url(#dotg)"/><rect x="64" y="465" width="1350" height="1" fill="url(#dotg)"/><rect x="64" y="446" width="1350" height="1" fill="url(#dotg)"/><rect x="64" y="426" width="1350" height="1" fill="url(#dotg)"/><rect x="64" y="407" width="1350" height="1" fill="url(#dotg)"/><rect x="64" y="388" width="1350" height="1" fill="url(#dotg)"/><rect x="64" y="369" width="1350" height="1" fill="url(#dotg)"/><rect x="64" y="350" width="1350" height="1" fill="url(#dotg)"/><rect x="64" y="797" width="1350" height="1" fill="url(#dotg)"/><rect x="64" y="777" width="1350" height="1" fill="url(#dotg)"/><rect x="64" y="757" width="1350" height="1" fill="url(#dotg)"/><rect x="64" y="738" width="1350" height="1" fill="url(#dotg)"/><rect x="64" y="718" width="1350" height="1" fill="url(#dotg)"/><rect x="64" y="698" width="1350" height="1" fill="url(#dotg)"/><rect x="64" y="678" width="1350" height="1" fill="url(#dotg)"/><rect x="64" y="659" width="1350" height="1" fill="url(#dotg)"/>
<line x1="64" x2="1414" y1="333.5" y2="333.5" stroke="#f1f1f3" stroke-width="1" stroke-dasharray="4 3"/>
<line x1="64" x2="1414" y1="489.5" y2="489.5" stroke="#f1f1f3" stroke-width="1" stroke-dasharray="4 3"/>
<line x1="64" x2="1414" y1="646.5" y2="646.5" stroke="#f1f1f3" stroke-width="1" stroke-dasharray="4 3"/>
<line x1="1413.5" x2="1413.5" y1="335" y2="489" stroke="#f6f6f8" stroke-width="1" stroke-dasharray="1 1.5"/>
<line x1="1413.5" x2="1413.5" y1="648" y2="803" stroke="#f6f6f8" stroke-width="1" stroke-dasharray="1 1.5"/>
<line x1="64" x2="1414" y1="802.5" y2="802.5" stroke="#f4f4f6" stroke-width="1" stroke-dasharray="4 3"/>
<line x1="150.5" x2="150.5" y1="177" y2="333" stroke="#e6e6e7" stroke-width="1" stroke-dasharray="3 1"/>
<line x1="150.5" x2="150.5" y1="333" y2="489" stroke="#d8d8de" stroke-width="1" stroke-dasharray="3 1"/>
<line x1="150.5" x2="150.5" y1="489" y2="646" stroke="#e6e6e7" stroke-width="1" stroke-dasharray="3 1"/>
<line x1="150.5" x2="150.5" y1="646" y2="803" stroke="#d8d8de" stroke-width="1" stroke-dasharray="3 1"/>
<line x1="232.5" x2="232.5" y1="177" y2="333" stroke="#e6e6e7" stroke-width="1" stroke-dasharray="3 1"/>
<line x1="232.5" x2="232.5" y1="333" y2="489" stroke="#d8d8de" stroke-width="1" stroke-dasharray="3 1"/>
<line x1="232.5" x2="232.5" y1="489" y2="646" stroke="#e6e6e7" stroke-width="1" stroke-dasharray="3 1"/>
<line x1="232.5" x2="232.5" y1="646" y2="803" stroke="#d8d8de" stroke-width="1" stroke-dasharray="3 1"/>
<line x1="314.5" x2="314.5" y1="177" y2="333" stroke="#e6e6e7" stroke-width="1" stroke-dasharray="3 1"/>
<line x1="314.5" x2="314.5" y1="333" y2="489" stroke="#d8d8de" stroke-width="1" stroke-dasharray="3 1"/>
<line x1="314.5" x2="314.5" y1="489" y2="646" stroke="#e6e6e7" stroke-width="1" stroke-dasharray="3 1"/>
<line x1="314.5" x2="314.5" y1="646" y2="803" stroke="#d8d8de" stroke-width="1" stroke-dasharray="3 1"/>
<line x1="396.5" x2="396.5" y1="177" y2="333" stroke="#e6e6e7" stroke-width="1" stroke-dasharray="3 1"/>
<line x1="396.5" x2="396.5" y1="333" y2="489" stroke="#d8d8de" stroke-width="1" stroke-dasharray="3 1"/>
<line x1="396.5" x2="396.5" y1="489" y2="646" stroke="#e6e6e7" stroke-width="1" stroke-dasharray="3 1"/>
<line x1="396.5" x2="396.5" y1="646" y2="803" stroke="#d8d8de" stroke-width="1" stroke-dasharray="3 1"/>
<line x1="478.5" x2="478.5" y1="177" y2="333" stroke="#e6e6e7" stroke-width="1" stroke-dasharray="3 1"/>
<line x1="478.5" x2="478.5" y1="333" y2="489" stroke="#d8d8de" stroke-width="1" stroke-dasharray="3 1"/>
<line x1="478.5" x2="478.5" y1="489" y2="646" stroke="#e6e6e7" stroke-width="1" stroke-dasharray="3 1"/>
<line x1="478.5" x2="478.5" y1="646" y2="803" stroke="#d8d8de" stroke-width="1" stroke-dasharray="3 1"/>
<line x1="560.5" x2="560.5" y1="177" y2="333" stroke="#e6e6e7" stroke-width="1" stroke-dasharray="3 1"/>
<line x1="560.5" x2="560.5" y1="333" y2="489" stroke="#d8d8de" stroke-width="1" stroke-dasharray="3 1"/>
<line x1="560.5" x2="560.5" y1="489" y2="646" stroke="#e6e6e7" stroke-width="1" stroke-dasharray="3 1"/>
<line x1="560.5" x2="560.5" y1="646" y2="803" stroke="#d8d8de" stroke-width="1" stroke-dasharray="3 1"/>
<line x1="642.5" x2="642.5" y1="177" y2="333" stroke="#e6e6e7" stroke-width="1" stroke-dasharray="3 1"/>
<line x1="642.5" x2="642.5" y1="333" y2="489" stroke="#d8d8de" stroke-width="1" stroke-dasharray="3 1"/>
<line x1="642.5" x2="642.5" y1="489" y2="646" stroke="#e6e6e7" stroke-width="1" stroke-dasharray="3 1"/>
<line x1="642.5" x2="642.5" y1="646" y2="803" stroke="#d8d8de" stroke-width="1" stroke-dasharray="3 1"/>
<line x1="724.5" x2="724.5" y1="177" y2="333" stroke="#e6e6e7" stroke-width="1" stroke-dasharray="3 1"/>
<line x1="724.5" x2="724.5" y1="333" y2="489" stroke="#d8d8de" stroke-width="1" stroke-dasharray="3 1"/>
<line x1="724.5" x2="724.5" y1="489" y2="646" stroke="#e6e6e7" stroke-width="1" stroke-dasharray="3 1"/>
<line x1="724.5" x2="724.5" y1="646" y2="803" stroke="#d8d8de" stroke-width="1" stroke-dasharray="3 1"/>
<line x1="805.5" x2="805.5" y1="177" y2="333" stroke="#e6e6e7" stroke-width="1" stroke-dasharray="3 1"/>
<line x1="805.5" x2="805.5" y1="333" y2="489" stroke="#d8d8de" stroke-width="1" stroke-dasharray="3 1"/>
<line x1="805.5" x2="805.5" y1="489" y2="646" stroke="#e6e6e7" stroke-width="1" stroke-dasharray="3 1"/>
<line x1="805.5" x2="805.5" y1="646" y2="803" stroke="#d8d8de" stroke-width="1" stroke-dasharray="3 1"/>
<line x1="887.5" x2="887.5" y1="177" y2="333" stroke="#e6e6e7" stroke-width="1" stroke-dasharray="3 1"/>
<line x1="887.5" x2="887.5" y1="333" y2="489" stroke="#d8d8de" stroke-width="1" stroke-dasharray="3 1"/>
<line x1="887.5" x2="887.5" y1="489" y2="646" stroke="#e6e6e7" stroke-width="1" stroke-dasharray="3 1"/>
<line x1="887.5" x2="887.5" y1="646" y2="803" stroke="#d8d8de" stroke-width="1" stroke-dasharray="3 1"/>
<line x1="969.5" x2="969.5" y1="177" y2="333" stroke="#e6e6e7" stroke-width="1" stroke-dasharray="3 1"/>
<line x1="969.5" x2="969.5" y1="333" y2="489" stroke="#d8d8de" stroke-width="1" stroke-dasharray="3 1"/>
<line x1="969.5" x2="969.5" y1="489" y2="646" stroke="#e6e6e7" stroke-width="1" stroke-dasharray="3 1"/>
<line x1="969.5" x2="969.5" y1="646" y2="803" stroke="#d8d8de" stroke-width="1" stroke-dasharray="3 1"/>
<line x1="1051.5" x2="1051.5" y1="177" y2="333" stroke="#e6e6e7" stroke-width="1" stroke-dasharray="3 1"/>
<line x1="1051.5" x2="1051.5" y1="333" y2="489" stroke="#d8d8de" stroke-width="1" stroke-dasharray="3 1"/>
<line x1="1051.5" x2="1051.5" y1="489" y2="646" stroke="#e6e6e7" stroke-width="1" stroke-dasharray="3 1"/>
<line x1="1051.5" x2="1051.5" y1="646" y2="803" stroke="#d8d8de" stroke-width="1" stroke-dasharray="3 1"/>
<line x1="1133.5" x2="1133.5" y1="177" y2="333" stroke="#e6e6e7" stroke-width="1" stroke-dasharray="3 1"/>
<line x1="1133.5" x2="1133.5" y1="333" y2="489" stroke="#d8d8de" stroke-width="1" stroke-dasharray="3 1"/>
<line x1="1133.5" x2="1133.5" y1="489" y2="646" stroke="#e6e6e7" stroke-width="1" stroke-dasharray="3 1"/>
<line x1="1133.5" x2="1133.5" y1="646" y2="803" stroke="#d8d8de" stroke-width="1" stroke-dasharray="3 1"/>
<line x1="1215.5" x2="1215.5" y1="177" y2="333" stroke="#e6e6e7" stroke-width="1" stroke-dasharray="3 1"/>
<line x1="1215.5" x2="1215.5" y1="333" y2="489" stroke="#d8d8de" stroke-width="1" stroke-dasharray="3 1"/>
<line x1="1215.5" x2="1215.5" y1="489" y2="646" stroke="#e6e6e7" stroke-width="1" stroke-dasharray="3 1"/>
<line x1="1215.5" x2="1215.5" y1="646" y2="803" stroke="#d8d8de" stroke-width="1" stroke-dasharray="3 1"/>
<line x1="1297.5" x2="1297.5" y1="177" y2="333" stroke="#e6e6e7" stroke-width="1" stroke-dasharray="3 1"/>
<line x1="1297.5" x2="1297.5" y1="333" y2="489" stroke="#d8d8de" stroke-width="1" stroke-dasharray="3 1"/>
<line x1="1297.5" x2="1297.5" y1="489" y2="646" stroke="#e6e6e7" stroke-width="1" stroke-dasharray="3 1"/>
<line x1="1297.5" x2="1297.5" y1="646" y2="803" stroke="#d8d8de" stroke-width="1" stroke-dasharray="3 1"/>
<line x1="1379.5" x2="1379.5" y1="177" y2="333" stroke="#e6e6e7" stroke-width="1" stroke-dasharray="3 1"/>
<line x1="1379.5" x2="1379.5" y1="333" y2="489" stroke="#d8d8de" stroke-width="1" stroke-dasharray="3 1"/>
<line x1="1379.5" x2="1379.5" y1="489" y2="646" stroke="#e6e6e7" stroke-width="1" stroke-dasharray="3 1"/>
<line x1="1379.5" x2="1379.5" y1="646" y2="803" stroke="#d8d8de" stroke-width="1" stroke-dasharray="3 1"/>
<rect x="63" y="177" width="1" height="626" fill="#4a4a4a"/>
<rect x="58" y="328" width="5" height="1" fill="#4a4a4a"/><rect x="60" y="323" width="3" height="1" fill="#4a4a4a"/><rect x="60" y="318" width="3" height="1" fill="#4a4a4a"/><rect x="60" y="313" width="3" height="1" fill="#4a4a4a"/><rect x="58" y="308" width="5" height="1" fill="#4a4a4a"/><rect x="60" y="303" width="3" height="1" fill="#4a4a4a"/><rect x="60" y="298" width="3" height="1" fill="#4a4a4a"/><rect x="60" y="293" width="3" height="1" fill="#4a4a4a"/><rect x="58" y="288" width="5" height="1" fill="#4a4a4a"/><rect x="60" y="283" width="3" height="1" fill="#4a4a4a"/><rect x="60" y="279" width="3" height="1" fill="#4a4a4a"/><rect x="60" y="274" width="3" height="1" fill="#4a4a4a"/><rect x="58" y="269" width="5" height="1" fill="#4a4a4a"/><rect x="60" y="264" width="3" height="1" fill="#4a4a4a"/><rect x="60" y="259" width="3" height="1" fill="#4a4a4a"/><rect x="60" y="254" width="3" height="1" fill="#4a4a4a"/><rect x="58" y="249" width="5" height="1" fill="#4a4a4a"/><rect x="60" y="244" width="3" height="1" fill="#4a4a4a"/><rect x="60" y="239" width="3" height="1" fill="#4a4a4a"/><rect x="60" y="234" width="3" height="1" fill="#4a4a4a"/><rect x="58" y="229" width="5" height="1" fill="#4a4a4a"/><rect x="60" y="225" width="3" height="1" fill="#4a4a4a"/><rect x="60" y="220" width="3" height="1" fill="#4a4a4a"/><rect x="60" y="215" width="3" height="1" fill="#4a4a4a"/><rect x="58" y="210" width="5" height="1" fill="#4a4a4a"/><rect x="60" y="205" width="3" height="1" fill="#4a4a4a"/><rect x="60" y="200" width="3" height="1" fill="#4a4a4a"/><rect x="60" y="195" width="3" height="1" fill="#4a4a4a"/><rect x="58" y="190" width="5" height="1" fill="#4a4a4a"/><rect x="60" y="185" width="3" height="1" fill="#4a4a4a"/><rect x="60" y="180" width="3" height="1" fill="#4a4a4a"/><rect x="58" y="484" width="5" height="1" fill="#4a4a4a"/><rect x="60" y="479" width="3" height="1" fill="#4a4a4a"/><rect x="60" y="474" width="3" height="1" fill="#4a4a4a"/><rect x="60" y="470" width="3" height="1" fill="#4a4a4a"/><rect x="58" y="465" width="5" height="1" fill="#4a4a4a"/><rect x="60" y="460" width="3" height="1" fill="#4a4a4a"/><rect x="60" y="455" width="3" height="1" fill="#4a4a4a"/><rect x="60" y="450" width="3" height="1" fill="#4a4a4a"/><rect x="58" y="446" width="5" height="1" fill="#4a4a4a"/><rect x="60" y="441" width="3" height="1" fill="#4a4a4a"/><rect x="60" y="436" width="3" height="1" fill="#4a4a4a"/><rect x="60" y="431" width="3" height="1" fill="#4a4a4a"/><rect x="58" y="426" width="5" height="1" fill="#4a4a4a"/><rect x="60" y="422" width="3" height="1" fill="#4a4a4a"/><rect x="60" y="417" width="3" height="1" fill="#4a4a4a"/><rect x="60" y="412" width="3" height="1" fill="#4a4a4a"/><rect x="58" y="407" width="5" height="1" fill="#4a4a4a"/><rect x="60" y="402" width="3" height="1" fill="#4a4a4a"/><rect x="60" y="398" width="3" height="1" fill="#4a4a4a"/><rect x="60" y="393" width="3" height="1" fill="#4a4a4a"/><rect x="58" y="388" width="5" height="1" fill="#4a4a4a"/><rect x="60" y="383" width="3" height="1" fill="#4a4a4a"/><rect x="60" y="378" width="3" height="1" fill="#4a4a4a"/><rect x="60" y="374" width="3" height="1" fill="#4a4a4a"/><rect x="58" y="369" width="5" height="1" fill="#4a4a4a"/><rect x="60" y="364" width="3" height="1" fill="#4a4a4a"/><rect x="60" y="359" width="3" height="1" fill="#4a4a4a"/><rect x="60" y="354" width="3" height="1" fill="#4a4a4a"/><rect x="58" y="350" width="5" height="1" fill="#4a4a4a"/><rect x="60" y="345" width="3" height="1" fill="#4a4a4a"/><rect x="60" y="340" width="3" height="1" fill="#4a4a4a"/><rect x="60" y="335" width="3" height="1" fill="#4a4a4a"/><rect x="60" y="644" width="3" height="1" fill="#4a4a4a"/><rect x="58" y="641" width="5" height="1" fill="#4a4a4a"/><rect x="60" y="638" width="3" height="1" fill="#4a4a4a"/><rect x="60" y="635" width="3" height="1" fill="#4a4a4a"/><rect x="60" y="633" width="3" height="1" fill="#4a4a4a"/><rect x="60" y="630" width="3" height="1" fill="#4a4a4a"/><rect x="58" y="627" width="5" height="1" fill="#4a4a4a"/><rect x="60" y="624" width="3" height="1" fill="#4a4a4a"/><rect x="60" y="622" width="3" height="1" fill="#4a4a4a"/><rect x="60" y="619" width="3" height="1" fill="#4a4a4a"/><rect x="60" y="616" width="3" height="1" fill="#4a4a4a"/><rect x="58" y="613" width="5" height="1" fill="#4a4a4a"/><rect x="60" y="610" width="3" height="1" fill="#4a4a4a"/><rect x="60" y="608" width="3" height="1" fill="#4a4a4a"/><rect x="60" y="605" width="3" height="1" fill="#4a4a4a"/><rect x="60" y="602" width="3" height="1" fill="#4a4a4a"/><rect x="58" y="599" width="5" height="1" fill="#4a4a4a"/><rect x="60" y="597" width="3" height="1" fill="#4a4a4a"/><rect x="60" y="594" width="3" height="1" fill="#4a4a4a"/><rect x="60" y="591" width="3" height="1" fill="#4a4a4a"/><rect x="60" y="588" width="3" height="1" fill="#4a4a4a"/><rect x="58" y="585" width="5" height="1" fill="#4a4a4a"/><rect x="60" y="583" width="3" height="1" fill="#4a4a4a"/><rect x="60" y="580" width="3" height="1" fill="#4a4a4a"/><rect x="60" y="577" width="3" height="1" fill="#4a4a4a"/><rect x="60" y="574" width="3" height="1" fill="#4a4a4a"/><rect x="58" y="572" width="5" height="1" fill="#4a4a4a"/><rect x="60" y="569" width="3" height="1" fill="#4a4a4a"/><rect x="60" y="566" width="3" height="1" fill="#4a4a4a"/><rect x="60" y="563" width="3" height="1" fill="#4a4a4a"/><rect x="60" y="560" width="3" height="1" fill="#4a4a4a"/><rect x="58" y="558" width="5" height="1" fill="#4a4a4a"/><rect x="60" y="555" width="3" height="1" fill="#4a4a4a"/><rect x="60" y="552" width="3" height="1" fill="#4a4a4a"/><rect x="60" y="549" width="3" height="1" fill="#4a4a4a"/><rect x="60" y="546" width="3" height="1" fill="#4a4a4a"/><rect x="58" y="544" width="5" height="1" fill="#4a4a4a"/><rect x="60" y="541" width="3" height="1" fill="#4a4a4a"/><rect x="60" y="538" width="3" height="1" fill="#4a4a4a"/><rect x="60" y="535" width="3" height="1" fill="#4a4a4a"/><rect x="60" y="533" width="3" height="1" fill="#4a4a4a"/><rect x="58" y="530" width="5" height="1" fill="#4a4a4a"/><rect x="60" y="527" width="3" height="1" fill="#4a4a4a"/><rect x="60" y="524" width="3" height="1" fill="#4a4a4a"/><rect x="60" y="521" width="3" height="1" fill="#4a4a4a"/><rect x="60" y="519" width="3" height="1" fill="#4a4a4a"/><rect x="58" y="516" width="5" height="1" fill="#4a4a4a"/><rect x="60" y="513" width="3" height="1" fill="#4a4a4a"/><rect x="60" y="510" width="3" height="1" fill="#4a4a4a"/><rect x="60" y="508" width="3" height="1" fill="#4a4a4a"/><rect x="60" y="505" width="3" height="1" fill="#4a4a4a"/><rect x="58" y="502" width="5" height="1" fill="#4a4a4a"/><rect x="60" y="499" width="3" height="1" fill="#4a4a4a"/><rect x="60" y="496" width="3" height="1" fill="#4a4a4a"/><rect x="60" y="494" width="3" height="1" fill="#4a4a4a"/><rect x="60" y="491" width="3" height="1" fill="#4a4a4a"/><rect x="58" y="797" width="5" height="1" fill="#4a4a4a"/><rect x="60" y="792" width="3" height="1" fill="#4a4a4a"/><rect x="60" y="787" width="3" height="1" fill="#4a4a4a"/><rect x="60" y="782" width="3" height="1" fill="#4a4a4a"/><rect x="58" y="777" width="5" height="1" fill="#4a4a4a"/><rect x="60" y="772" width="3" height="1" fill="#4a4a4a"/><rect x="60" y="767" width="3" height="1" fill="#4a4a4a"/><rect x="60" y="762" width="3" height="1" fill="#4a4a4a"/><rect x="58" y="757" width="5" height="1" fill="#4a4a4a"/><rect x="60" y="752" width="3" height="1" fill="#4a4a4a"/><rect x="60" y="748" width="3" height="1" fill="#4a4a4a"/><rect x="60" y="743" width="3" height="1" fill="#4a4a4a"/><rect x="58" y="738" width="5" height="1" fill="#4a4a4a"/><rect x="60" y="733" width="3" height="1" fill="#4a4a4a"/><rect x="60" y="728" width="3" height="1" fill="#4a4a4a"/><rect x="60" y="723" width="3" height="1" fill="#4a4a4a"/><rect x="58" y="718" width="5" height="1" fill="#4a4a4a"/><rect x="60" y="713" width="3" height="1" fill="#4a4a4a"/><rect x="60" y="708" width="3" height="1" fill="#4a4a4a"/><rect x="60" y="703" width="3" height="1" fill="#4a4a4a"/><rect x="58" y="698" width="5" height="1" fill="#4a4a4a"/><rect x="60" y="693" width="3" height="1" fill="#4a4a4a"/><rect x="60" y="688" width="3" height="1" fill="#4a4a4a"/><rect x="60" y="683" width="3" height="1" fill="#4a4a4a"/><rect x="58" y="678" width="5" height="1" fill="#4a4a4a"/><rect x="60" y="673" width="3" height="1" fill="#4a4a4a"/><rect x="60" y="669" width="3" height="1" fill="#4a4a4a"/><rect x="60" y="664" width="3" height="1" fill="#4a4a4a"/><rect x="58" y="659" width="5" height="1" fill="#4a4a4a"/><rect x="60" y="654" width="3" height="1" fill="#4a4a4a"/><rect x="60" y="649" width="3" height="1" fill="#4a4a4a"/>
<g font-size="10.6" text-anchor="end" font-family='"Liberation Sans", "Noto Sans CJK SC", sans-serif'>
<text x="55.5" y="332.1" fill="#ff1a1a">0</text><text x="55.5" y="312.4" fill="#ff1a1a">200</text><text x="55.5" y="292.8" fill="#ff1a1a">400</text><text x="55.5" y="273.1" fill="#ff1a1a">600</text><text x="55.5" y="253.5" fill="#ff1a1a">800</text><text x="55.5" y="233.8" fill="#ff1a1a">1000</text><text x="55.5" y="214.2" fill="#ff1a1a">1200</text><text x="55.5" y="194.6" fill="#ff1a1a">1400</text><text x="55.5" y="488.3" fill="#56565c">0</text><text x="55.5" y="469.1" fill="#56565c">200</text><text x="55.5" y="449.9" fill="#56565c">400</text><text x="55.5" y="430.7" fill="#56565c">600</text><text x="55.5" y="411.5" fill="#56565c">800</text><text x="55.5" y="392.3" fill="#56565c">1000</text><text x="55.5" y="373.1" fill="#56565c">1200</text><text x="55.5" y="353.9" fill="#56565c">1400</text><text x="55.5" y="645.4" fill="#56565c">0</text><text x="55.5" y="631.5" fill="#56565c">1</text><text x="55.5" y="617.6" fill="#56565c">2</text><text x="55.5" y="603.7" fill="#56565c">3</text><text x="55.5" y="589.8" fill="#56565c">4</text><text x="55.5" y="575.9" fill="#56565c">5</text><text x="55.5" y="562.0" fill="#56565c">6</text><text x="55.5" y="548.1" fill="#56565c">7</text><text x="55.5" y="534.2" fill="#56565c">8</text><text x="55.5" y="520.3" fill="#56565c">9</text><text x="55.5" y="506.4" fill="#56565c">10</text><text x="55.5" y="801.3" fill="#56565c">0</text><text x="55.5" y="781.5" fill="#56565c">200</text><text x="55.5" y="761.8" fill="#56565c">400</text><text x="55.5" y="742.0" fill="#56565c">600</text><text x="55.5" y="722.3" fill="#56565c">800</text><text x="55.5" y="702.5" fill="#56565c">1000</text><text x="55.5" y="682.8" fill="#56565c">1200</text><text x="55.5" y="663.0" fill="#56565c">1400</text>
</g>
<g font-size="10.6" text-anchor="middle" fill="#56565c" font-family='"Liberation Sans", "Noto Sans CJK SC", sans-serif'>
<text x="68.2" y="814">0</text>
<text x="150.1" y="814">1</text>
<text x="232.1" y="814">2</text>
<text x="314.0" y="814">3</text>
<text x="396.0" y="814">4</text>
<text x="477.9" y="814">5</text>
<text x="559.8" y="814">6</text>
<text x="641.8" y="814">7</text>
<text x="723.7" y="814">8</text>
<text x="805.7" y="814">9</text>
<text x="887.6" y="814">10</text>
<text x="969.5" y="814">11</text>
<text x="1051.5" y="814">12</text>
<text x="1133.4" y="814">13</text>
<text x="1215.4" y="814">14</text>
<text x="1297.3" y="814">15</text>
<text x="1379.2" y="814">16</text>
<text x="737.5" y="831" font-size="11">[s]</text>
</g>
<g fill="none" stroke-width="1" stroke-linejoin="miter" stroke-linecap="square" shape-rendering="crispEdges">
<polyline stroke="#ff0000" points="68.5,304.5 70.5,304.5 70.5,302.5 71.5,302.5 71.5,300.5 73.5,300.5 73.5,297.5 74.5,297.5 74.5,295.5 76.5,295.5 76.5,292.5 78.5,292.5 78.5,290.5 79.5,290.5 79.5,287.5 81.5,287.5 81.5,285.5 83.5,285.5 83.5,282.5 84.5,282.5 84.5,280.5 86.5,280.5 86.5,277.5 88.5,277.5 88.5,275.5 89.5,275.5 89.5,273.5 91.5,273.5 91.5,270.5 93.5,270.5 93.5,268.5 94.5,268.5 94.5,265.5 96.5,265.5 96.5,263.5 97.5,263.5 97.5,260.5 99.5,260.5 99.5,258.5 101.5,258.5 101.5,255.5 102.5,255.5 102.5,253.5 104.5,253.5 104.5,251.5 106.5,251.5 106.5,248.5 107.5,248.5 107.5,246.5 109.5,246.5 109.5,243.5 111.5,243.5 111.5,241.5 112.5,241.5 112.5,238.5 114.5,238.5 114.5,236.5 116.5,236.5 116.5,233.5 117.5,233.5 117.5,231.5 119.5,231.5 119.5,228.5 120.5,228.5 120.5,226.5 122.5,226.5 122.5,224.5 124.5,224.5 124.5,221.5 125.5,221.5 125.5,219.5 127.5,219.5 127.5,216.5 129.5,216.5 129.5,214.5 130.5,214.5 130.5,211.5 132.5,211.5 132.5,209.5 134.5,209.5 134.5,206.5 135.5,206.5 135.5,204.5 137.5,204.5 137.5,202.5 139.5,202.5 139.5,199.5 140.5,199.5 140.5,197.5 142.5,197.5 142.5,194.5 143.5,194.5 143.5,192.5 145.5,192.5 145.5,189.5 147.5,189.5 147.5,187.5 148.5,187.5 148.5,184.5 150.5,184.5 150.5,182.5 417.5,182.5 418.5,182.5 418.5,185.5 420.5,185.5 420.5,189.5 421.5,189.5 421.5,192.5 423.5,192.5 423.5,195.5 425.5,195.5 425.5,199.5 426.5,199.5 426.5,202.5 428.5,202.5 428.5,205.5 430.5,205.5 430.5,209.5 431.5,209.5 431.5,212.5 433.5,212.5 433.5,215.5 435.5,215.5 435.5,219.5 436.5,219.5 436.5,222.5 438.5,222.5 438.5,225.5 440.5,225.5 440.5,229.5 441.5,229.5 441.5,232.5 443.5,232.5 443.5,236.5 444.5,236.5 444.5,239.5 446.5,239.5 446.5,242.5 448.5,242.5 448.5,246.5 449.5,246.5 449.5,249.5 451.5,249.5 451.5,252.5 453.5,252.5 453.5,256.5 454.5,256.5 454.5,259.5 456.5,259.5 456.5,262.5 458.5,262.5 458.5,266.5 459.5,266.5 459.5,269.5 461.5,269.5 461.5,272.5 463.5,272.5 463.5,276.5 464.5,276.5 464.5,279.5 466.5,279.5 466.5,282.5 468.5,282.5 468.5,286.5 469.5,286.5 469.5,289.5 471.5,289.5 471.5,292.5 472.5,292.5 472.5,296.5 474.5,296.5 474.5,299.5 476.5,299.5 476.5,303.5 477.5,303.5 477.5,306.5 479.5,306.5 479.5,309.5 481.5,309.5 481.5,313.5 514.5,313.5 515.5,313.5 515.5,316.5 517.5,316.5 517.5,319.5 518.5,319.5 518.5,322.5 520.5,322.5 520.5,325.5 522.5,325.5 522.5,328.5 523.5,328.5 523.5,326.5 525.5,326.5 525.5,328.5 1408.5,328.5"/>
<polyline stroke="#559e55" points="68.5,461.5 70.5,461.5 70.5,459.5 71.5,459.5 71.5,456.5 73.5,456.5 73.5,454.5 74.5,454.5 74.5,451.5 76.5,451.5 76.5,449.5 78.5,449.5 78.5,447.5 79.5,447.5 79.5,444.5 81.5,444.5 81.5,442.5 83.5,442.5 83.5,439.5 84.5,439.5 84.5,437.5 86.5,437.5 86.5,435.5 87.5,435.5 87.5,432.5 89.5,432.5 89.5,430.5 91.5,430.5 91.5,428.5 92.5,428.5 92.5,425.5 94.5,425.5 94.5,423.5 96.5,423.5 96.5,420.5 97.5,420.5 97.5,418.5 99.5,418.5 99.5,416.5 101.5,416.5 101.5,413.5 102.5,413.5 102.5,411.5 104.5,411.5 104.5,409.5 105.5,409.5 105.5,406.5 107.5,406.5 107.5,404.5 109.5,404.5 109.5,401.5 110.5,401.5 110.5,399.5 112.5,399.5 112.5,397.5 114.5,397.5 114.5,394.5 115.5,394.5 115.5,392.5 117.5,392.5 117.5,389.5 118.5,389.5 118.5,387.5 120.5,387.5 120.5,385.5 122.5,385.5 122.5,382.5 123.5,382.5 123.5,380.5 125.5,380.5 125.5,378.5 127.5,378.5 127.5,375.5 128.5,375.5 128.5,373.5 130.5,373.5 130.5,370.5 132.5,370.5 132.5,368.5 133.5,368.5 133.5,366.5 135.5,366.5 135.5,363.5 136.5,363.5 136.5,361.5 138.5,361.5 138.5,359.5 140.5,359.5 140.5,356.5 141.5,356.5 141.5,354.5 143.5,354.5 143.5,351.5 145.5,351.5 145.5,349.5 146.5,349.5 146.5,347.5 148.5,347.5 148.5,344.5 150.5,344.5 150.5,342.5 151.5,342.5 151.5,340.5 153.5,340.5 153.5,339.5 154.5,339.5 154.5,338.5 156.5,338.5 158.5,338.5 158.5,339.5 159.5,339.5 159.5,340.5 161.5,340.5 161.5,341.5 163.5,341.5 164.5,341.5 164.5,342.5 166.5,342.5 174.5,342.5 181.5,342.5 189.5,342.5 194.5,342.5 202.5,342.5 205.5,342.5 210.5,342.5 213.5,342.5 216.5,342.5 219.5,342.5 226.5,342.5 235.5,342.5 241.5,342.5 250.5,342.5 256.5,342.5 260.5,342.5 266.5,342.5 271.5,342.5 271.5,343.5 278.5,343.5 278.5,342.5 284.5,342.5 288.5,342.5 294.5,342.5 300.5,342.5 304.5,342.5 310.5,342.5 310.5,343.5 314.5,343.5 314.5,342.5 323.5,342.5 327.5,342.5 327.5,343.5 331.5,343.5 335.5,343.5 335.5,342.5 339.5,342.5 348.5,342.5 353.5,342.5 362.5,342.5 368.5,342.5 375.5,342.5 384.5,342.5 386.5,342.5 389.5,342.5 396.5,342.5 396.5,343.5 400.5,343.5 400.5,342.5 405.5,342.5 411.5,342.5 414.5,342.5 416.5,342.5 418.5,342.5 418.5,344.5 419.5,344.5 419.5,345.5 421.5,345.5 421.5,347.5 423.5,347.5 423.5,349.5 424.5,349.5 424.5,353.5 426.5,353.5 426.5,357.5 428.5,357.5 428.5,360.5 429.5,360.5 429.5,364.5 431.5,364.5 431.5,367.5 433.5,367.5 433.5,371.5 434.5,371.5 434.5,374.5 436.5,374.5 436.5,378.5 438.5,378.5 438.5,381.5 439.5,381.5 439.5,385.5 441.5,385.5 441.5,388.5 443.5,388.5 443.5,392.5 444.5,392.5 444.5,395.5 446.5,395.5 446.5,399.5 448.5,399.5 448.5,402.5 449.5,402.5 449.5,406.5 451.5,406.5 451.5,409.5 452.5,409.5 452.5,413.5 454.5,413.5 454.5,416.5 456.5,416.5 456.5,420.5 457.5,420.5 457.5,423.5 459.5,423.5 459.5,427.5 461.5,427.5 461.5,430.5 462.5,430.5 462.5,434.5 464.5,434.5 464.5,437.5 466.5,437.5 466.5,441.5 467.5,441.5 467.5,444.5 469.5,444.5 469.5,448.5 471.5,448.5 471.5,451.5 472.5,451.5 472.5,455.5 474.5,455.5 474.5,458.5 476.5,458.5 476.5,462.5 477.5,462.5 477.5,465.5 479.5,465.5 479.5,468.5 481.5,468.5 481.5,470.5 482.5,470.5 482.5,472.5 484.5,472.5 484.5,473.5 486.5,473.5 486.5,475.5 487.5,475.5 489.5,475.5 491.5,475.5 491.5,474.5 492.5,474.5 492.5,473.5 494.5,473.5 494.5,472.5 495.5,472.5 497.5,472.5 497.5,471.5 499.5,471.5 499.5,470.5 514.5,470.5 515.5,470.5 515.5,472.5 517.5,472.5 517.5,473.5 519.5,473.5 519.5,476.5 520.5,476.5 520.5,478.5 522.5,478.5 522.5,481.5 524.5,481.5 524.5,482.5 526.5,482.5 526.5,484.5 1408.5,484.5"/>
<polyline stroke="#0a84d2" points="68.5,555.5 69.5,555.5 70.5,555.5 70.5,554.5 71.5,554.5 71.5,550.5 71.5,547.5 72.5,547.5 72.5,548.5 73.5,548.5 74.5,548.5 74.5,558.5 75.5,558.5 75.5,553.5 76.5,553.5 76.5,558.5 76.5,552.5 77.5,552.5 77.5,549.5 78.5,549.5 78.5,550.5 79.5,550.5 79.5,551.5 80.5,551.5 80.5,552.5 80.5,557.5 81.5,557.5 82.5,557.5 82.5,556.5 83.5,556.5 83.5,553.5 84.5,553.5 84.5,557.5 85.5,557.5 85.5,551.5 85.5,550.5 86.5,550.5 86.5,551.5 87.5,551.5 87.5,561.5 88.5,561.5 88.5,553.5 89.5,553.5 89.5,555.5 89.5,557.5 90.5,557.5 90.5,553.5 91.5,553.5 91.5,562.5 92.5,562.5 92.5,564.5 93.5,564.5 93.5,558.5 94.5,558.5 94.5,560.5 94.5,553.5 95.5,553.5 95.5,559.5 96.5,559.5 96.5,553.5 97.5,553.5 97.5,558.5 98.5,558.5 98.5,557.5 98.5,555.5 99.5,555.5 99.5,548.5 100.5,548.5 100.5,556.5 101.5,556.5 101.5,557.5 102.5,557.5 102.5,552.5 103.5,552.5 103.5,550.5 103.5,556.5 104.5,556.5 104.5,555.5 105.5,555.5 106.5,555.5 106.5,557.5 107.5,557.5 107.5,558.5 108.5,558.5 108.5,560.5 108.5,557.5 109.5,557.5 109.5,550.5 110.5,550.5 110.5,559.5 111.5,559.5 111.5,557.5 112.5,557.5 112.5,555.5 112.5,561.5 113.5,561.5 113.5,560.5 114.5,560.5 114.5,559.5 115.5,559.5 115.5,552.5 116.5,552.5 116.5,551.5 117.5,551.5 117.5,559.5 117.5,554.5 118.5,554.5 118.5,559.5 119.5,559.5 119.5,554.5 120.5,554.5 120.5,549.5 121.5,549.5 121.5,554.5 122.5,554.5 123.5,554.5 123.5,555.5 124.5,555.5 124.5,557.5 125.5,557.5 125.5,555.5 126.5,555.5 126.5,556.5 126.5,557.5 127.5,557.5 127.5,554.5 128.5,554.5 128.5,556.5 129.5,556.5 129.5,555.5 129.5,556.5 131.5,556.5 131.5,563.5 132.5,563.5 132.5,567.5 133.5,567.5 133.5,571.5 135.5,571.5 135.5,576.5 136.5,576.5 136.5,578.5 137.5,578.5 137.5,580.5 138.5,580.5 138.5,582.5 140.5,582.5 140.5,585.5 141.5,585.5 141.5,586.5 142.5,586.5 142.5,587.5 143.5,587.5 143.5,588.5 144.5,588.5 144.5,590.5 146.5,590.5 146.5,588.5 147.5,588.5 147.5,587.5 148.5,587.5 150.5,587.5 152.5,587.5 152.5,592.5 154.5,592.5 154.5,602.5 155.5,602.5 155.5,604.5 156.5,604.5 156.5,606.5 158.5,606.5 158.5,603.5 159.5,603.5 159.5,599.5 161.5,599.5 161.5,596.5 162.5,596.5 162.5,592.5 164.5,592.5 164.5,589.5 166.5,589.5 166.5,587.5 167.5,587.5 167.5,586.5 168.5,586.5 168.5,588.5 169.5,588.5 169.5,587.5 170.5,587.5 171.5,587.5 171.5,588.5 172.5,588.5 172.5,587.5 173.5,587.5 173.5,588.5 174.5,588.5 174.5,590.5 175.5,590.5 175.5,588.5 176.5,588.5 176.5,589.5 177.5,589.5 177.5,586.5 178.5,586.5 178.5,590.5 179.5,590.5 179.5,588.5 180.5,588.5 180.5,587.5 180.5,588.5 181.5,588.5 181.5,587.5 182.5,587.5 183.5,587.5 183.5,590.5 184.5,590.5 184.5,587.5 185.5,587.5 186.5,587.5 187.5,587.5 187.5,586.5 188.5,586.5 188.5,588.5 189.5,588.5 189.5,585.5 190.5,585.5 190.5,589.5 191.5,589.5 191.5,588.5 192.5,588.5 192.5,589.5 193.5,589.5 194.5,589.5 194.5,588.5 195.5,588.5 195.5,587.5 196.5,587.5 196.5,585.5 197.5,585.5 197.5,586.5 198.5,586.5 198.5,588.5 198.5,586.5 199.5,586.5 199.5,587.5 200.5,587.5 201.5,587.5 201.5,588.5 202.5,588.5 202.5,587.5 203.5,587.5 203.5,586.5 204.5,586.5 205.5,586.5 205.5,585.5 206.5,585.5 207.5,585.5 207.5,588.5 207.5,589.5 208.5,589.5 208.5,590.5 209.5,590.5 209.5,588.5 210.5,588.5 211.5,588.5 211.5,589.5 212.5,589.5 212.5,587.5 212.5,589.5 213.5,589.5 213.5,588.5 214.5,588.5 214.5,585.5 215.5,585.5 215.5,587.5 216.5,587.5 216.5,588.5 217.5,588.5 217.5,589.5 218.5,589.5 219.5,589.5 219.5,587.5 220.5,587.5 220.5,589.5 221.5,589.5 221.5,590.5 221.5,588.5 222.5,588.5 223.5,588.5 223.5,586.5 224.5,586.5 224.5,587.5 225.5,587.5 225.5,585.5 225.5,588.5 226.5,588.5 227.5,588.5 227.5,587.5 228.5,587.5 228.5,589.5 229.5,589.5 229.5,587.5 230.5,587.5 230.5,590.5 231.5,590.5 231.5,585.5 232.5,585.5 232.5,587.5 233.5,587.5 233.5,589.5 234.5,589.5 234.5,590.5 235.5,590.5 235.5,585.5 235.5,586.5 236.5,586.5 236.5,587.5 237.5,587.5 238.5,587.5 238.5,588.5 239.5,588.5 239.5,586.5 239.5,590.5 240.5,590.5 240.5,586.5 241.5,586.5 242.5,586.5 242.5,589.5 243.5,589.5 243.5,587.5 244.5,587.5 244.5,588.5 244.5,587.5 245.5,587.5 246.5,587.5 246.5,588.5 247.5,588.5 248.5,588.5 248.5,589.5 248.5,586.5 249.5,586.5 249.5,590.5 250.5,590.5 250.5,586.5 251.5,586.5 251.5,585.5 252.5,585.5 252.5,589.5 253.5,589.5 253.5,588.5 253.5,585.5 254.5,585.5 254.5,586.5 255.5,586.5 255.5,585.5 256.5,585.5 256.5,588.5 257.5,588.5 257.5,587.5 257.5,585.5 258.5,585.5 259.5,585.5 259.5,589.5 260.5,589.5 260.5,586.5 261.5,586.5 261.5,588.5 262.5,588.5 262.5,585.5 262.5,589.5 263.5,589.5 263.5,585.5 264.5,585.5 264.5,588.5 265.5,588.5 265.5,586.5 266.5,586.5 266.5,588.5 267.5,588.5 268.5,588.5 268.5,589.5 269.5,589.5 270.5,589.5 270.5,587.5 271.5,587.5 271.5,586.5 271.5,588.5 272.5,588.5 273.5,588.5 274.5,588.5 274.5,590.5 275.5,590.5 275.5,587.5 276.5,587.5 276.5,589.5 277.5,589.5 277.5,588.5 278.5,588.5 278.5,585.5 279.5,585.5 279.5,588.5 280.5,588.5 280.5,589.5 280.5,590.5 281.5,590.5 281.5,586.5 282.5,586.5 282.5,587.5 283.5,587.5 283.5,586.5 284.5,586.5 284.5,588.5 284.5,587.5 285.5,587.5 285.5,586.5 286.5,586.5 286.5,587.5 287.5,587.5 287.5,588.5 288.5,588.5 288.5,587.5 289.5,587.5 289.5,589.5 289.5,588.5 290.5,588.5 290.5,586.5 291.5,586.5 291.5,588.5 292.5,588.5 292.5,590.5 293.5,590.5 293.5,589.5 294.5,589.5 294.5,585.5 294.5,590.5 295.5,590.5 296.5,590.5 296.5,588.5 297.5,588.5 297.5,585.5 298.5,585.5 298.5,587.5 299.5,587.5 299.5,589.5 300.5,589.5 300.5,587.5 301.5,587.5 301.5,588.5 302.5,588.5 302.5,590.5 303.5,590.5 303.5,588.5 303.5,587.5 304.5,587.5 304.5,588.5 305.5,588.5 305.5,589.5 306.5,589.5 307.5,589.5 307.5,587.5 307.5,586.5 308.5,586.5 308.5,587.5 309.5,587.5 309.5,588.5 310.5,588.5 310.5,589.5 311.5,589.5 311.5,586.5 312.5,586.5 312.5,589.5 312.5,588.5 313.5,588.5 313.5,589.5 314.5,589.5 314.5,587.5 315.5,587.5 315.5,588.5 316.5,588.5 316.5,586.5 316.5,587.5 317.5,587.5 318.5,587.5 318.5,588.5 319.5,588.5 319.5,589.5 320.5,589.5 320.5,588.5 321.5,588.5 321.5,591.5 321.5,586.5 322.5,586.5 322.5,589.5 323.5,589.5 323.5,590.5 324.5,590.5 324.5,589.5 325.5,589.5 325.5,588.5 325.5,587.5 326.5,587.5 326.5,586.5 327.5,586.5 328.5,586.5 328.5,589.5 329.5,589.5 329.5,587.5 330.5,587.5 330.5,585.5 330.5,588.5 331.5,588.5 331.5,587.5 332.5,587.5 332.5,586.5 333.5,586.5 333.5,587.5 334.5,587.5 335.5,587.5 335.5,586.5 336.5,586.5 336.5,588.5 337.5,588.5 337.5,590.5 338.5,590.5 338.5,585.5 339.5,585.5 339.5,590.5 339.5,587.5 340.5,587.5 341.5,587.5 341.5,586.5 342.5,586.5 342.5,591.5 343.5,591.5 343.5,589.5 343.5,587.5 344.5,587.5 344.5,589.5 345.5,589.5 345.5,587.5 346.5,587.5 346.5,588.5 347.5,588.5 347.5,586.5 348.5,586.5 348.5,588.5 348.5,587.5 349.5,587.5 349.5,586.5 350.5,586.5 350.5,587.5 351.5,587.5 351.5,589.5 352.5,589.5 352.5,587.5 353.5,587.5 353.5,588.5 354.5,588.5 355.5,588.5 355.5,590.5 356.5,590.5 356.5,588.5 357.5,588.5 358.5,588.5 358.5,587.5 359.5,587.5 359.5,588.5 360.5,588.5 361.5,588.5 361.5,589.5 362.5,589.5 362.5,590.5 362.5,588.5 363.5,588.5 364.5,588.5 364.5,586.5 365.5,586.5 365.5,588.5 366.5,588.5 366.5,590.5 366.5,591.5 367.5,591.5 367.5,589.5 368.5,589.5 368.5,587.5 369.5,587.5 369.5,589.5 370.5,589.5 370.5,590.5 371.5,590.5 371.5,589.5 372.5,589.5 372.5,588.5 373.5,588.5 373.5,589.5 374.5,589.5 374.5,591.5 375.5,591.5 375.5,590.5 376.5,590.5 376.5,588.5 377.5,588.5 377.5,589.5 378.5,589.5 378.5,586.5 379.5,586.5 379.5,589.5 380.5,589.5 380.5,591.5 380.5,589.5 381.5,589.5 381.5,588.5 382.5,588.5 382.5,587.5 383.5,587.5 383.5,588.5 384.5,588.5 384.5,587.5 384.5,586.5 385.5,586.5 385.5,589.5 386.5,589.5 386.5,587.5 387.5,587.5 387.5,589.5 388.5,589.5 388.5,588.5 389.5,588.5 390.5,588.5 390.5,587.5 391.5,587.5 391.5,588.5 392.5,588.5 392.5,587.5 393.5,587.5 393.5,588.5 393.5,586.5 394.5,586.5 394.5,588.5 395.5,588.5 395.5,586.5 396.5,586.5 396.5,587.5 397.5,587.5 397.5,586.5 398.5,586.5 398.5,585.5 398.5,588.5 399.5,588.5 399.5,586.5 400.5,586.5 400.5,589.5 401.5,589.5 401.5,588.5 402.5,588.5 402.5,589.5 402.5,587.5 403.5,587.5 403.5,589.5 404.5,589.5 404.5,587.5 405.5,587.5 405.5,588.5 406.5,588.5 406.5,590.5 407.5,590.5 407.5,589.5 408.5,589.5 408.5,587.5 409.5,587.5 409.5,590.5 410.5,590.5 410.5,587.5 411.5,587.5 411.5,585.5 412.5,585.5 412.5,588.5 412.5,589.5 413.5,589.5 413.5,587.5 414.5,587.5 414.5,590.5 415.5,590.5 415.5,589.5 416.5,589.5 416.5,586.5 416.5,588.5 417.5,588.5 418.5,588.5 418.5,585.5 419.5,590.5 420.5,590.5 420.5,585.5 421.5,585.5 421.5,580.5 422.5,580.5 422.5,568.5 424.5,568.5 424.5,556.5 425.5,556.5 425.5,546.5 426.5,546.5 426.5,536.5 427.5,536.5 427.5,527.5 428.5,527.5 428.5,520.5 429.5,520.5 429.5,513.5 430.5,513.5 430.5,507.5 431.5,507.5 431.5,500.5 432.5,500.5 432.5,494.5 433.5,494.5 433.5,496.5 434.5,496.5 434.5,511.5 435.5,511.5 435.5,513.5 436.5,513.5 436.5,531.5 438.5,531.5 438.5,544.5 439.5,544.5 439.5,546.5 441.5,546.5 441.5,556.5 442.5,556.5 443.5,556.5 443.5,557.5 444.5,557.5 444.5,559.5 445.5,559.5 445.5,553.5 446.5,553.5 446.5,550.5 446.5,549.5 447.5,549.5 447.5,555.5 448.5,555.5 448.5,557.5 449.5,557.5 449.5,554.5 450.5,554.5 450.5,553.5 450.5,555.5 451.5,555.5 451.5,556.5 452.5,556.5 452.5,550.5 453.5,550.5 453.5,554.5 454.5,554.5 454.5,553.5 455.5,553.5 455.5,550.5 455.5,556.5 456.5,556.5 456.5,551.5 457.5,551.5 457.5,553.5 458.5,553.5 458.5,551.5 459.5,551.5 459.5,554.5 459.5,552.5 460.5,552.5 460.5,551.5 461.5,551.5 461.5,550.5 462.5,550.5 462.5,553.5 463.5,553.5 463.5,551.5 464.5,551.5 464.5,554.5 464.5,552.5 465.5,552.5 465.5,554.5 466.5,554.5 466.5,550.5 467.5,550.5 467.5,554.5 468.5,554.5 468.5,556.5 468.5,552.5 469.5,552.5 469.5,550.5 470.5,550.5 470.5,551.5 471.5,551.5 472.5,551.5 472.5,555.5 473.5,555.5 473.5,549.5 473.5,554.5 474.5,554.5 474.5,552.5 475.5,552.5 475.5,550.5 476.5,550.5 476.5,553.5 477.5,553.5 477.5,551.5 478.5,551.5 478.5,554.5 479.5,554.5 479.5,553.5 480.5,553.5 480.5,552.5 481.5,553.5 483.5,553.5 483.5,562.5 484.5,562.5 484.5,563.5 485.5,563.5 485.5,565.5 486.5,565.5 487.5,565.5 488.5,565.5 489.5,565.5 489.5,564.5 490.5,564.5 490.5,563.5 491.5,563.5 492.5,563.5 492.5,564.5 494.5,564.5 494.5,565.5 495.5,565.5 496.5,565.5 497.5,565.5 497.5,566.5 498.5,566.5 499.5,566.5 500.5,566.5 500.5,567.5 501.5,567.5 502.5,567.5 503.5,567.5 504.5,567.5 505.5,567.5 506.5,567.5 507.5,567.5 508.5,567.5 508.5,568.5 509.5,568.5 509.5,567.5 510.5,567.5 511.5,567.5 511.5,566.5 512.5,566.5 512.5,568.5 513.5,568.5 513.5,566.5 513.5,567.5 514.5,567.5 515.5,568.5 516.5,568.5 516.5,566.5 518.5,566.5 518.5,565.5 519.5,565.5 519.5,561.5 520.5,561.5 520.5,557.5 522.5,557.5 522.5,550.5 523.5,550.5 523.5,549.5 523.5,556.5 524.5,556.5 526.5,556.5 527.5,556.5 527.5,555.5 528.5,555.5 528.5,554.5 529.5,554.5 529.5,552.5 530.5,552.5 530.5,551.5 531.5,551.5 531.5,553.5 532.5,553.5 533.5,553.5 533.5,641.5 1408.5,641.5"/>
<polyline stroke="#ff00ff" points="68.5,774.5 70.5,774.5 70.5,771.5 71.5,771.5 71.5,769.5 73.5,769.5 73.5,766.5 74.5,766.5 74.5,764.5 76.5,764.5 76.5,761.5 78.5,761.5 78.5,759.5 79.5,759.5 79.5,756.5 81.5,756.5 81.5,754.5 83.5,754.5 83.5,751.5 84.5,751.5 84.5,749.5 86.5,749.5 86.5,747.5 88.5,747.5 88.5,744.5 89.5,744.5 89.5,742.5 91.5,742.5 91.5,739.5 93.5,739.5 93.5,737.5 94.5,737.5 94.5,734.5 96.5,734.5 96.5,732.5 97.5,732.5 97.5,729.5 99.5,729.5 99.5,727.5 101.5,727.5 101.5,725.5 102.5,725.5 102.5,722.5 104.5,722.5 104.5,720.5 106.5,720.5 106.5,717.5 107.5,717.5 107.5,715.5 109.5,715.5 109.5,712.5 111.5,712.5 111.5,710.5 112.5,710.5 112.5,707.5 114.5,707.5 114.5,705.5 116.5,705.5 116.5,702.5 117.5,702.5 117.5,700.5 119.5,700.5 119.5,698.5 120.5,698.5 120.5,695.5 122.5,695.5 122.5,693.5 124.5,693.5 124.5,690.5 125.5,690.5 125.5,688.5 127.5,688.5 127.5,685.5 129.5,685.5 129.5,683.5 130.5,683.5 130.5,680.5 132.5,680.5 132.5,678.5 134.5,678.5 134.5,676.5 135.5,676.5 135.5,673.5 137.5,673.5 137.5,671.5 139.5,671.5 139.5,668.5 140.5,668.5 140.5,666.5 142.5,666.5 142.5,663.5 143.5,663.5 143.5,661.5 145.5,661.5 145.5,658.5 147.5,658.5 147.5,656.5 148.5,656.5 148.5,653.5 150.5,653.5 150.5,651.5 417.5,651.5 418.5,651.5 418.5,654.5 420.5,654.5 420.5,658.5 421.5,658.5 421.5,661.5 423.5,661.5 423.5,664.5 425.5,664.5 425.5,668.5 426.5,668.5 426.5,671.5 428.5,671.5 428.5,674.5 430.5,674.5 430.5,678.5 431.5,678.5 431.5,681.5 433.5,681.5 433.5,685.5 435.5,685.5 435.5,688.5 436.5,688.5 436.5,691.5 438.5,691.5 438.5,695.5 440.5,695.5 440.5,698.5 441.5,698.5 441.5,701.5 443.5,701.5 443.5,705.5 444.5,705.5 444.5,708.5 446.5,708.5 446.5,711.5 448.5,711.5 448.5,715.5 449.5,715.5 449.5,718.5 451.5,718.5 451.5,721.5 453.5,721.5 453.5,725.5 454.5,725.5 454.5,728.5 456.5,728.5 456.5,731.5 458.5,731.5 458.5,735.5 459.5,735.5 459.5,738.5 461.5,738.5 461.5,741.5 463.5,741.5 463.5,745.5 464.5,745.5 464.5,748.5 466.5,748.5 466.5,752.5 468.5,752.5 468.5,755.5 469.5,755.5 469.5,758.5 471.5,758.5 471.5,762.5 472.5,762.5 472.5,765.5 474.5,765.5 474.5,768.5 476.5,768.5 476.5,772.5 477.5,772.5 477.5,775.5 479.5,775.5 479.5,778.5 481.5,778.5 481.5,782.5 514.5,782.5 515.5,782.5 515.5,785.5 517.5,785.5 517.5,788.5 518.5,788.5 518.5,791.5 520.5,791.5 520.5,794.5 522.5,794.5 522.5,797.5 523.5,797.5 523.5,795.5 525.5,795.5 525.5,797.5 1408.5,797.5"/>
</g>
<line x1="68.5" x2="68.5" y1="177" y2="803" stroke="#0a9a9a" stroke-width="1" stroke-dasharray="4 1.7 1 1.7"/>
<path d="M64.8 171.2 L72.2 171.2 L68.5 178.6 Z" fill="#dff0f0" stroke="#0a9a9a" stroke-width="1.4"/>
<g font-size="12" text-anchor="end" font-family='"Liberation Sans", "Noto Sans CJK SC", sans-serif'>
<text x="1409.5" y="259" fill="#ff0000"><tspan letter-spacing="-0.1">设定值滤波器前的转速设定值</tspan><tspan font-size="11.6" dx="4">(rpm)</tspan></text>
<rect x="1262" y="403" width="149" height="16" fill="#f6f6f8"/><text x="1409.5" y="415" fill="#559e55"><tspan letter-spacing="-0.1">转速实际值, 未滤波的</tspan><tspan font-size="11.6" dx="4">(rpm)</tspan></text>
<text x="1409.5" y="572" fill="#0a84d2"><tspan letter-spacing="-0.1">电流实际值的绝对值, 未滤波的</tspan><tspan font-size="11.6" dx="4">(Arms)</tspan></text>
<rect x="1268" y="716" width="143" height="16" fill="#f6f6f8"/><text x="1409.5" y="728" fill="#ff00ff"><tspan letter-spacing="-0.1">已滤波的转速设定值</tspan><tspan font-size="11.6" dx="4">(rpm)</tspan></text>
</g>
<text transform="translate(12.2 374.5) rotate(-90)" font-size="12.3" letter-spacing=".3" fill="#ff1a1a" font-family='"Liberation Sans", "Noto Sans CJK SC", sans-serif'>设定值滤波器前的转速设定值 <tspan font-size="12.6" dx="1.5" letter-spacing="0">(rpm)</tspan></text>
<text x="689" y="153.3" font-size="11.8" font-weight="bold" fill="#111" font-family='"Liberation Sans", "Noto Sans CJK SC", sans-serif'>Trace [<tspan font-size="12.6" letter-spacing="1.35">安装的轨迹</tspan><tspan dx="-.8">]</tspan></text>
<text x="26" y="166.8" font-size="11.4" textLength="131" lengthAdjust="spacing" fill="#8a8a8a" font-family='"Liberation Sans", "Noto Sans CJK SC", sans-serif'>2026/4/12 15:11:11.829</text>
<rect x="11" y="847" width="4" height="30" fill="#fafafa"/>
<rect x="15.5" y="847.5" width="1394" height="29" fill="#fedd9e" stroke="#000" stroke-width="1.3"/>
<line x1="185.5" x2="185.5" y1="849" y2="876" stroke="#efc98a" stroke-width="1" stroke-dasharray="3 2"/>
<rect x="185" y="877" width="1" height="6" fill="#444"/>
<line x1="356.5" x2="356.5" y1="849" y2="876" stroke="#efc98a" stroke-width="1" stroke-dasharray="3 2"/>
<rect x="356" y="877" width="1" height="6" fill="#444"/>
<line x1="526.5" x2="526.5" y1="849" y2="876" stroke="#efc98a" stroke-width="1" stroke-dasharray="3 2"/>
<rect x="526" y="877" width="1" height="6" fill="#444"/>
<line x1="697.5" x2="697.5" y1="849" y2="876" stroke="#efc98a" stroke-width="1" stroke-dasharray="3 2"/>
<rect x="697" y="877" width="1" height="6" fill="#444"/>
<line x1="867.5" x2="867.5" y1="849" y2="876" stroke="#efc98a" stroke-width="1" stroke-dasharray="3 2"/>
<rect x="867" y="877" width="1" height="6" fill="#444"/>
<line x1="1037.5" x2="1037.5" y1="849" y2="876" stroke="#efc98a" stroke-width="1" stroke-dasharray="3 2"/>
<rect x="1037" y="877" width="1" height="6" fill="#444"/>
<line x1="1208.5" x2="1208.5" y1="849" y2="876" stroke="#efc98a" stroke-width="1" stroke-dasharray="3 2"/>
<rect x="1208" y="877" width="1" height="6" fill="#444"/>
<line x1="1378.5" x2="1378.5" y1="849" y2="876" stroke="#efc98a" stroke-width="1" stroke-dasharray="3 2"/>
<rect x="1378" y="877" width="1" height="6" fill="#444"/>
<rect x="16" y="859" width="1393" height="1" fill="#a8843f"/>
<rect x="16" y="871" width="1393" height="1" fill="#f3d08f"/>
<polyline fill="none" stroke="#ff0000" stroke-width="1" stroke-linecap="square" shape-rendering="crispEdges" points="16.5,869.5 21.5,869.5 21.5,868.5 26.5,868.5 26.5,867.5 31.5,867.5 31.5,866.5 37.5,866.5 37.5,865.5 42.5,865.5 42.5,864.5 47.5,864.5 47.5,863.5 53.5,863.5 53.5,861.5 58.5,861.5 58.5,860.5 63.5,860.5 63.5,859.5 68.5,859.5 68.5,858.5 74.5,858.5 74.5,857.5 79.5,857.5 79.5,856.5 84.5,856.5 84.5,855.5 90.5,855.5 90.5,854.5 95.5,854.5 95.5,853.5 100.5,853.5 100.5,852.5 378.5,852.5 383.5,852.5 383.5,853.5 388.5,853.5 388.5,855.5 393.5,855.5 393.5,856.5 398.5,856.5 398.5,857.5 403.5,857.5 403.5,859.5 408.5,859.5 408.5,860.5 413.5,860.5 413.5,862.5 418.5,862.5 418.5,863.5 423.5,863.5 423.5,864.5 428.5,864.5 428.5,866.5 433.5,866.5 433.5,867.5 438.5,867.5 438.5,869.5 443.5,869.5 443.5,870.5 480.5,870.5 480.5,871.5 484.5,871.5 487.5,872.5 1409.5,872.5"/>
<rect x="7" y="849" width="3" height="1" fill="#ff2020"/>
<rect x="7" y="852" width="3" height="1" fill="#ff2020"/>
<rect x="7" y="856" width="3" height="1" fill="#ff2020"/>
<rect x="5" y="859" width="5" height="1" fill="#ff2020"/>
<rect x="7" y="862" width="3" height="1" fill="#ff2020"/>
<rect x="7" y="866" width="3" height="1" fill="#ff2020"/>
<rect x="7" y="869" width="3" height="1" fill="#ff2020"/>
<rect x="5" y="872" width="5" height="1" fill="#ff2020"/>
<rect x="7" y="875" width="3" height="1" fill="#ff2020"/>
<rect x="10" y="859" width="5" height="1" fill="#888"/>
<path d="M10.5 882 L19.5 882 L15 874 Z" fill="#000"/>
<path d="M1404.5 882 L1413.5 882 L1409 874 Z" fill="#000"/>
<rect x="1408" y="847" width="2" height="30" fill="#000"/>
<rect x="1410" y="847" width="4" height="30" fill="#fafafa"/>
</svg><svg class="ann" width="220" height="120" viewBox="0 40 220 120" style="left:0;top:40px"><rect x="54" y="50" width="97.5" height="32" fill="none" stroke="#ed1c24" stroke-width="3.2"/><polygon points="34.3,122.7 38.3,119.9 44.5,114.1 54.2,102.3 57.7,103.2 61.7,85.3 41.1,95.9 47.5,97.3 38.9,109.9 35.1,117.5 33.5,122.1" fill="#ed1c24"/><polygon points="77.1,122.8 79.8,119.4 83.5,113.1 88.4,100.8 92.8,103.8 89.5,84.6 74.3,99.9 80.5,98.1 76.9,110.8 76.0,118.2 76.1,122.4" fill="#ed1c24"/><polygon points="125.1,124.3 125.8,120.3 125.9,113.3 124.1,100.9 130.6,105.2 117.1,87.3 112.7,102.5 115.9,102.6 119.1,114.7 121.9,121.1 124.1,124.5" fill="#ed1c24"/><polygon points="168.8,127.5 168.4,122.9 166.5,115.0 161.3,101.4 167.0,99.9 150.5,87.3 149.1,106.5 153.6,104.7 160.1,117.8 164.7,124.5 167.8,127.9" fill="#ed1c24"/><g font-size="26" fill="#ed1c24" font-family="Liberation Sans, sans-serif" text-anchor="middle"><text x="30.5" y="149">1</text><text x="78.2" y="146.4">2</text><text x="125" y="148.3">3</text><text x="170.5" y="150.2">4</text></g></svg><div class="combo"><span>自动</span><div><svg style="left:3px;top:5px" width="9" height="5" viewBox="0 0 9 5"><path d="M0 0 h9 l-4.5 5z" fill="#000"/></svg></div></div><div class="hbar"></div><svg style="left:688px;top:885px" width="62" height="8" viewBox="0 0 62 8"><rect x=".5" y=".5" width="28" height="8" fill="#c8c8c8" stroke="#888"/><path d="M11 6.5 h8 l-4 -5z" fill="#000"/><rect x="36.5" y=".5" width="24" height="8" fill="#dcdcdc" stroke="#aaa"/><path d="M44 2.5 h8 l-4 4.5z" fill="#8c8c8c"/></svg></div></body></html>
